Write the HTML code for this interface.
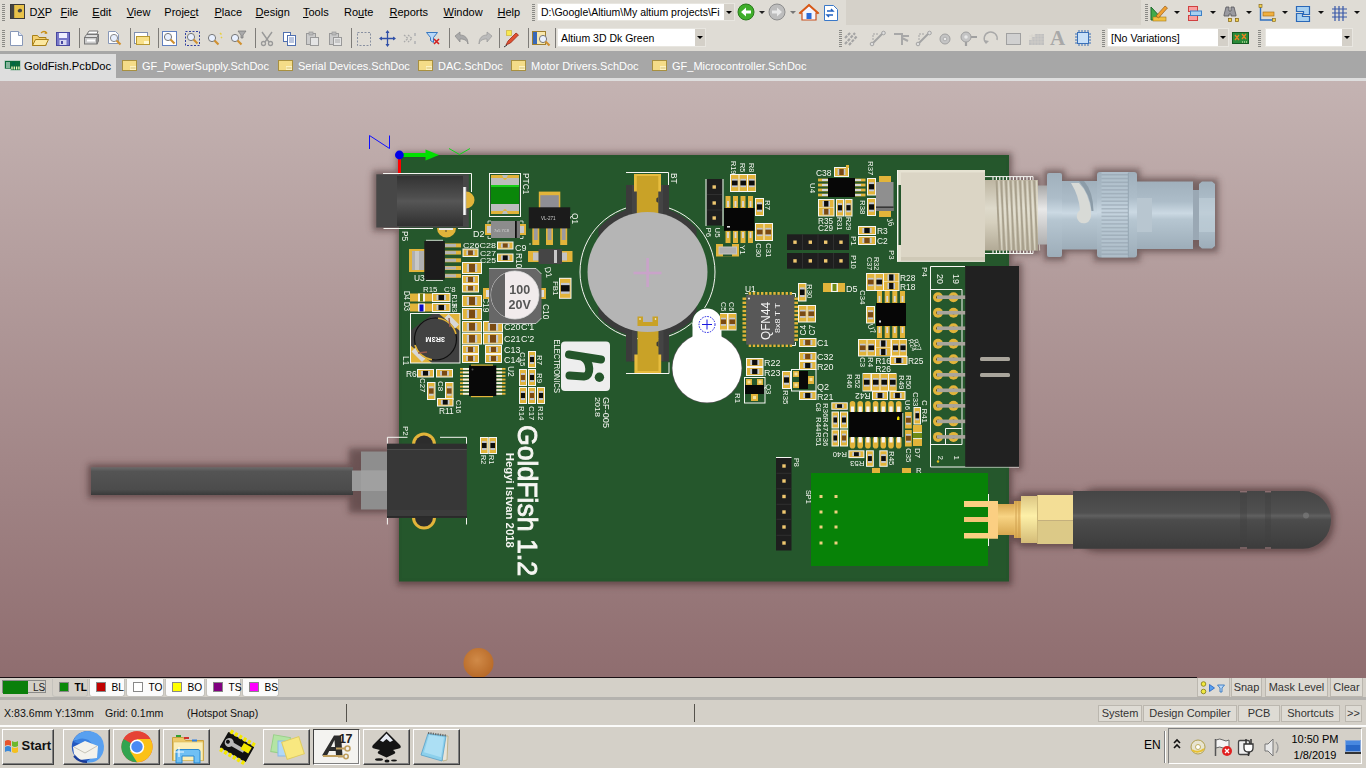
<!DOCTYPE html>
<html lang="en"><head><meta charset="utf-8"><title>Altium Designer - GoldFish.PcbDoc</title>
<style>
*{box-sizing:border-box}
html,body{margin:0;padding:0;width:1366px;height:768px;overflow:hidden;background:#d4d0c8;font-family:"Liberation Sans",sans-serif}
.abs,.bar,.mi,.tab,.st,.btn,.tbtn,.combo,.grip,.sep,.ltab{position:absolute}
.mi{font-size:11px;line-height:14px;color:#000;white-space:nowrap}
.mi u{text-decoration:underline;text-underline-offset:1px}
.tab{font-size:11px;line-height:14px;white-space:nowrap}
.st{font-size:10.6px;line-height:14px;color:#111;white-space:nowrap}
.grip{width:3px;height:17px;background:repeating-linear-gradient(#8a8a86 0 1px,transparent 1px 2px)}
.sep{width:1px;height:20px;background:#7e7c78}
.combo{background:#fff;border:1px solid #e8e6e0;font-size:11px;line-height:13px;color:#000;overflow:hidden;white-space:nowrap}
.combo span{position:absolute}
.combo i{position:absolute;right:0;top:0;bottom:0;width:10px;background:#d4d0c8}
.combo i:after{content:"";position:absolute;left:2px;top:7px;border:3px solid transparent;border-top:3.5px solid #000}
.btn{border:1px solid #bbb7af;font-size:11px;line-height:15px;text-align:center;color:#333;white-space:nowrap;background:#dedbd4}
.tbtn{border:1px solid;border-color:#fff #404040 #404040 #fff;box-shadow:inset -1px -1px 0 #808080;background:#d4d0c8}
.ltab{top:679px;height:18px;border:1px solid #c4c2bc;border-top:none;border-radius:0 0 3px 3px;font-size:10.2px;line-height:16px;color:#000}
.ltab b{position:absolute;left:6px;top:3px;width:10px;height:10px;border:1px solid #888}
.ltab span{position:absolute;left:21.5px;top:1px}
</style></head>
<body>
<svg class="abs" style="left:0;top:81px;will-change:transform" width="1366" height="597" viewBox="0 81 1366 597" font-family="'Liberation Sans',sans-serif">
<defs><linearGradient id="bg" x1="0" y1="0" x2="0" y2="1"><stop offset="0" stop-color="#c4b3b2"/><stop offset="1" stop-color="#8f6d6f"/></linearGradient><filter id="bl" x="-20%" y="-20%" width="140%" height="140%"><feGaussianBlur stdDeviation="4.5"/></filter><filter id="bl3" x="-10%" y="-10%" width="120%" height="120%"><feGaussianBlur stdDeviation="2"/></filter><filter id="bl2" x="-20%" y="-40%" width="140%" height="180%"><feGaussianBlur stdDeviation="4"/></filter><linearGradient id="cyl" x1="0" y1="0" x2="0" y2="1"><stop offset="0" stop-color="#333"/><stop offset=".42" stop-color="#4e4e4e"/><stop offset=".5" stop-color="#565656"/><stop offset="1" stop-color="#303030"/></linearGradient><linearGradient id="ant" x1="0" y1="0" x2="0" y2="1"><stop offset="0" stop-color="#454545"/><stop offset=".38" stop-color="#505050"/><stop offset=".43" stop-color="#606060"/><stop offset=".5" stop-color="#4c4c4c"/><stop offset="1" stop-color="#3c3c3c"/></linearGradient><linearGradient id="cab" x1="0" y1="0" x2="0" y2="1"><stop offset="0" stop-color="#6a6a6a"/><stop offset=".15" stop-color="#545454"/><stop offset=".8" stop-color="#4c4c4c"/><stop offset="1" stop-color="#3a3a3a"/></linearGradient><linearGradient id="bnc" x1="0" y1="0" x2="0" y2="1"><stop offset="0" stop-color="#a0b0bc"/><stop offset=".3" stop-color="#adbdc9"/><stop offset=".47" stop-color="#cbd9e3"/><stop offset=".56" stop-color="#b6c6d1"/><stop offset="1" stop-color="#9dadb9"/></linearGradient><linearGradient id="thr" x1="0" y1="0" x2="0" y2="1"><stop offset="0" stop-color="#beb6a2"/><stop offset=".4" stop-color="#dedacb"/><stop offset=".6" stop-color="#d6d0be"/><stop offset="1" stop-color="#b2aa96"/></linearGradient><linearGradient id="sil" x1="0" y1="0" x2="0" y2="1"><stop offset="0" stop-color="#a8a8a8"/><stop offset=".4" stop-color="#e8e8e8"/><stop offset="1" stop-color="#b0b0b0"/></linearGradient><linearGradient id="sma" x1="0" y1="0" x2="0" y2="1"><stop offset="0" stop-color="#d8a850"/><stop offset=".4" stop-color="#f8d484"/><stop offset="1" stop-color="#d8a850"/></linearGradient><linearGradient id="smr" x1="0" y1="0" x2="0" y2="1"><stop offset="0" stop-color="#dcc684"/><stop offset=".42" stop-color="#fdf0a8"/><stop offset="1" stop-color="#d4bc78"/></linearGradient><radialGradient id="org" cx=".45" cy=".4" r=".6"><stop offset="0" stop-color="#d08a48"/><stop offset="1" stop-color="#b86a28"/></radialGradient><linearGradient id="pinw" x1="0" y1="0" x2="1" y2="0"><stop offset="0" stop-color="#bbb"/><stop offset=".5" stop-color="#fff"/><stop offset="1" stop-color="#aaa"/></linearGradient></defs>
<rect x="0" y="81" width="1366" height="597" fill="url(#bg)"/>
<g filter="url(#bl)" opacity=".30" fill="#2a1414">
<rect x="397" y="153" width="615" height="432" fill="#2a1414"/>
<rect x="373" y="171" width="30" height="60" fill="#2a1414"/>
<rect x="985" y="176" width="55" height="78" fill="#2a1414"/>
<rect x="1044" y="170" width="21" height="90" fill="#2a1414"/>
<rect x="1062" y="178" width="134" height="74" fill="#2a1414"/>
<rect x="1094" y="169" width="46" height="92" fill="#2a1414"/>
<rect x="1196" y="179" width="22" height="73" fill="#2a1414"/>
<rect x="1014" y="263" width="8" height="207" fill="#2a1414"/>
<rect x="1012" y="498" width="28" height="44" fill="#2a1414"/>
<rect x="1019" y="492" width="57" height="55" fill="#2a1414"/>
<rect x="1070" y="488" width="264" height="64" fill="#2a1414" rx="28"/>
<rect x="88" y="464.5" width="268" height="33.5" fill="#2a1414"/>
<rect x="349" y="448.5" width="42" height="64" fill="#2a1414"/>
</g>
<g filter="url(#bl3)" opacity=".22" fill="#2a1414">
<rect x="397" y="153" width="615" height="432" fill="#2a1414"/>
<rect x="373" y="171" width="30" height="60" fill="#2a1414"/>
<rect x="985" y="176" width="55" height="78" fill="#2a1414"/>
<rect x="1044" y="170" width="21" height="90" fill="#2a1414"/>
<rect x="1062" y="178" width="134" height="74" fill="#2a1414"/>
<rect x="1094" y="169" width="46" height="92" fill="#2a1414"/>
<rect x="1196" y="179" width="22" height="73" fill="#2a1414"/>
<rect x="1014" y="263" width="8" height="207" fill="#2a1414"/>
<rect x="1012" y="498" width="28" height="44" fill="#2a1414"/>
<rect x="1019" y="492" width="57" height="55" fill="#2a1414"/>
<rect x="1070" y="488" width="264" height="64" fill="#2a1414" rx="28"/>
<rect x="88" y="464.5" width="268" height="33.5" fill="#2a1414"/>
<rect x="349" y="448.5" width="42" height="64" fill="#2a1414"/>
</g>
<rect x="399" y="155" width="610" height="426.5" fill="#24552b"/>
<rect x="402" y="158" width="604" height="420" fill="#265a2d" opacity=".5"/>
<path d="M399.5 158L399.5 174" stroke="#ff0000" stroke-width="3"/>
<rect x="403" y="153" width="24" height="4" fill="#00e000"/>
<path d="M425.5 149.5L439 155L425.5 160.5z" fill="#00e000"/>
<circle cx="399.4" cy="155" r="4.4" fill="#0000e8"/>
<path d="M369.5 149V135.5L389.5 148.500V135.5" fill="none" stroke="#1010ff" stroke-width="1"/>
<path d="M449 148.500L459.500 154.500L470 148.500" fill="none" stroke="#10d818" stroke-width="1"/>
<path d="M433 228.500H383.5M383 173.500H471.500V192M471.500 210V228.500H458" fill="none" stroke="#f6f6f2" stroke-width="1"/>
<path d="M437 228a9.5 9.5 0 0 0 19 0z" fill="#e2b43a"/>
<rect x="439" y="228" width="14" height="2" fill="#e8e8e8"/>
<circle cx="446" cy="231" r="0.8" fill="#333"/>
<rect x="376.3" y="174.3" width="92.5" height="53.2" fill="#474747"/>
<rect x="397" y="176" width="66" height="50" fill="url(#cyl)"/>
<path d="M466 191.500a8.500 8.500 0 0 1 0 17z" fill="#e2b43a"/>
<rect x="463" y="187" width="3.3" height="28" fill="url(#pinw)"/>
<text x="402" y="231" font-size="8.4" fill="#f6f6f2" text-anchor="start" transform="rotate(90 402 231)">P5</text>
<rect x="489.5" y="173.5" width="31" height="43" fill="none" stroke="#f6f6f2" stroke-width="1"/>
<rect x="491" y="175" width="28" height="39" fill="#e2b43a"/>
<rect x="491" y="178" width="28" height="33" fill="#bdbdbd"/>
<path d="M502 175h6l-1.500 3h-3z" fill="#bdbdbd"/>
<path d="M502 214h6l-1.500-3h-3z" fill="#bdbdbd"/>
<path d="M503 178h4l-1 1.800h-2z" fill="#e2b43a"/>
<path d="M503 211h4l-1-1.800h-2z" fill="#e2b43a"/>
<rect x="491" y="185" width="28" height="19" fill="#0a870a"/>
<rect x="491" y="185" width="28" height="2" fill="#18d018"/>
<text x="522.5" y="173" font-size="8.4" fill="#f6f6f2" text-anchor="start" transform="rotate(90 522.5 173)">PTC1</text>
<rect x="485" y="224" width="41" height="11" fill="#e2b43a"/>
<rect x="487" y="226" width="4" height="7" fill="#c8c8c8"/>
<rect x="520" y="226" width="4" height="7" fill="#c8c8c8"/>
<rect x="491" y="221" width="29" height="17" fill="#8c8c8c"/>
<rect x="515" y="221" width="1.8" height="17" fill="#111"/>
<rect x="517" y="221" width="3" height="17" fill="#777"/>
<path d="M488 223.500V221h3M488 236v2.500h3M523 223.500V221h-3M523 236v2.500h-3" fill="none" stroke="#f6f6f2" stroke-width="0.8"/>
<text x="473" y="237" font-size="8.96" fill="#f6f6f2" text-anchor="start">D2</text>
<text x="494" y="232" font-size="4" fill="#d8d8d8" text-anchor="start">7x5 7C8</text>
<rect x="538.8" y="191.6" width="21.5" height="17" fill="#e2b43a"/>
<rect x="540.3" y="195.2" width="18.5" height="13" fill="#8e8e94"/>
<rect x="532.3" y="228" width="7" height="17" fill="#e2b43a"/>
<rect x="533.9" y="228" width="3.8" height="12" fill="#9a9aa0"/>
<rect x="546" y="228" width="7" height="17" fill="#e2b43a"/>
<rect x="547.6" y="228" width="3.8" height="12" fill="#9a9aa0"/>
<rect x="560.2" y="228" width="7" height="17" fill="#e2b43a"/>
<rect x="561.8" y="228" width="3.8" height="12" fill="#9a9aa0"/>
<rect x="528.8" y="207.3" width="41.4" height="21.1" fill="#1b1b1b"/>
<text x="541" y="220" font-size="4.5" fill="#d0d0d0" text-anchor="start">VL-271</text>
<text x="571.5" y="213" font-size="8.4" fill="#f6f6f2" text-anchor="start" transform="rotate(90 571.5 213)">Q1</text>
<path d="M529 244L531 244" stroke="#f6f6f2" stroke-width="0.8"/>
<rect x="409" y="249" width="16" height="23" fill="#e2b43a"/>
<rect x="412" y="251" width="12" height="19" fill="#b0b0b0"/>
<rect x="415" y="251" width="4" height="19" fill="#c8c8c8"/>
<rect x="445" y="243.4" width="16" height="4" fill="#e2b43a"/>
<rect x="445" y="243.9" width="11" height="3" fill="#b4b4b4"/>
<rect x="445" y="250.6" width="16" height="4" fill="#e2b43a"/>
<rect x="445" y="251.1" width="11" height="3" fill="#b4b4b4"/>
<rect x="445" y="258.3" width="16" height="4" fill="#e2b43a"/>
<rect x="445" y="258.8" width="11" height="3" fill="#b4b4b4"/>
<rect x="445" y="266" width="16" height="4" fill="#e2b43a"/>
<rect x="445" y="266.5" width="11" height="3" fill="#b4b4b4"/>
<rect x="445" y="273.8" width="16" height="4" fill="#e2b43a"/>
<rect x="445" y="274.3" width="11" height="3" fill="#b4b4b4"/>
<rect x="424.3" y="241" width="20.5" height="38.8" fill="#1c1c1c"/>
<path d="M426 240.3L443 240.3" stroke="#f6f6f2" stroke-width="0.8"/>
<path d="M426 280.5L443 280.5" stroke="#f6f6f2" stroke-width="0.8"/>
<text x="414" y="281" font-size="8.4" fill="#f6f6f2" text-anchor="start">U3</text>
<rect x="462.5" y="248.5" width="16" height="8.5" fill="#f6f6f2"/>
<rect x="463.5" y="249.5" width="14" height="6.5" fill="#e2b43a"/>
<rect x="466.34" y="250.4" width="8.32" height="4.7" fill="#c4c8d2"/>
<rect x="468.1" y="250.4" width="4.8" height="4.7" fill="#7a4a12"/>
<rect x="497" y="241.5" width="16.5" height="8" fill="#f6f6f2"/>
<rect x="498" y="242.5" width="14.5" height="6" fill="#e2b43a"/>
<rect x="500.96" y="243.4" width="8.58" height="4.2" fill="#c4c8d2"/>
<rect x="502.77" y="243.4" width="4.95" height="4.2" fill="#7a4a12"/>
<rect x="497" y="253.5" width="16.5" height="8.5" fill="#f6f6f2"/>
<rect x="498" y="254.5" width="14.5" height="6.5" fill="#e2b43a"/>
<rect x="500.96" y="255.4" width="8.58" height="4.7" fill="#c4c8d2"/>
<rect x="502.77" y="255.4" width="4.95" height="4.7" fill="#0c0c0c"/>
<text x="463" y="248" font-size="7" fill="#f6f6f2" text-anchor="start" textLength="33" lengthAdjust="spacingAndGlyphs">C26C28</text>
<text x="480" y="255.5" font-size="7" fill="#f6f6f2" text-anchor="start" textLength="16" lengthAdjust="spacingAndGlyphs">C27</text>
<text x="480" y="262.5" font-size="7" fill="#f6f6f2" text-anchor="start" textLength="16" lengthAdjust="spacingAndGlyphs">C25</text>
<text x="515" y="251" font-size="8.96" fill="#f6f6f2" text-anchor="start">C9</text>
<text x="515.5" y="253" font-size="8.4" fill="#f6f6f2" text-anchor="start" transform="rotate(90 515.5 253)">R10</text>
<rect x="462" y="262" width="20" height="12" fill="#f6f6f2"/>
<rect x="463" y="263" width="18" height="10" fill="#e2b43a"/>
<rect x="466.8" y="263.9" width="10.4" height="8.2" fill="#c4c8d2"/>
<rect x="469" y="263.9" width="6" height="8.2" fill="#7a4a12"/>
<rect x="462" y="275" width="17" height="9" fill="#f6f6f2"/>
<rect x="463" y="276" width="15" height="7" fill="#e2b43a"/>
<rect x="466.08" y="276.9" width="8.84" height="5.2" fill="#c4c8d2"/>
<rect x="467.95" y="276.9" width="5.1" height="5.2" fill="#7a4a12"/>
<rect x="462" y="284" width="17" height="8.5" fill="#f6f6f2"/>
<rect x="463" y="285" width="15" height="6.5" fill="#e2b43a"/>
<rect x="466.08" y="285.9" width="8.84" height="4.7" fill="#c4c8d2"/>
<rect x="467.95" y="285.9" width="5.1" height="4.7" fill="#7a4a12"/>
<rect x="462" y="295" width="20" height="12" fill="#f6f6f2"/>
<rect x="463" y="296" width="18" height="10" fill="#e2b43a"/>
<rect x="466.8" y="296.9" width="10.4" height="8.2" fill="#c4c8d2"/>
<rect x="469" y="296.9" width="6" height="8.2" fill="#7a4a12"/>
<rect x="462" y="308" width="20" height="12" fill="#f6f6f2"/>
<rect x="463" y="309" width="18" height="10" fill="#e2b43a"/>
<rect x="466.8" y="309.9" width="10.4" height="8.2" fill="#c4c8d2"/>
<rect x="469" y="309.9" width="6" height="8.2" fill="#7a4a12"/>
<rect x="462" y="321" width="20" height="11.5" fill="#f6f6f2"/>
<rect x="463" y="322" width="18" height="9.5" fill="#e2b43a"/>
<rect x="466.8" y="322.9" width="10.4" height="7.7" fill="#c4c8d2"/>
<rect x="469" y="322.9" width="6" height="7.7" fill="#7a4a12"/>
<rect x="462" y="333" width="20" height="11.5" fill="#f6f6f2"/>
<rect x="463" y="334" width="18" height="9.5" fill="#e2b43a"/>
<rect x="466.8" y="334.9" width="10.4" height="7.7" fill="#c4c8d2"/>
<rect x="469" y="334.9" width="6" height="7.7" fill="#7a4a12"/>
<rect x="462" y="345" width="17" height="9" fill="#f6f6f2"/>
<rect x="463" y="346" width="15" height="7" fill="#e2b43a"/>
<rect x="466.08" y="346.9" width="8.84" height="5.2" fill="#c4c8d2"/>
<rect x="467.95" y="346.9" width="5.1" height="5.2" fill="#7a4a12"/>
<rect x="462" y="354" width="17" height="9" fill="#f6f6f2"/>
<rect x="463" y="355" width="15" height="7" fill="#e2b43a"/>
<rect x="466.08" y="355.9" width="8.84" height="5.2" fill="#c4c8d2"/>
<rect x="467.95" y="355.9" width="5.1" height="5.2" fill="#7a4a12"/>
<rect x="483" y="321" width="20" height="11.5" fill="#f6f6f2"/>
<rect x="484" y="322" width="18" height="9.5" fill="#e2b43a"/>
<rect x="487.8" y="322.9" width="10.4" height="7.7" fill="#c4c8d2"/>
<rect x="490" y="322.9" width="6" height="7.7" fill="#7a4a12"/>
<rect x="483" y="333" width="20" height="11.5" fill="#f6f6f2"/>
<rect x="484" y="334" width="18" height="9.5" fill="#e2b43a"/>
<rect x="487.8" y="334.9" width="10.4" height="7.7" fill="#c4c8d2"/>
<rect x="490" y="334.9" width="6" height="7.7" fill="#7a4a12"/>
<rect x="485" y="345" width="17" height="9" fill="#f6f6f2"/>
<rect x="486" y="346" width="15" height="7" fill="#e2b43a"/>
<rect x="489.08" y="346.9" width="8.84" height="5.2" fill="#c4c8d2"/>
<rect x="490.95" y="346.9" width="5.1" height="5.2" fill="#7a4a12"/>
<rect x="485" y="354" width="17" height="9" fill="#f6f6f2"/>
<rect x="486" y="355" width="15" height="7" fill="#e2b43a"/>
<rect x="489.08" y="355.9" width="8.84" height="5.2" fill="#c4c8d2"/>
<rect x="490.95" y="355.9" width="5.1" height="5.2" fill="#7a4a12"/>
<text x="482.5" y="297" font-size="8.4" fill="#f6f6f2" text-anchor="start" transform="rotate(90 482.5 297)">C19</text>
<text x="504" y="329.5" font-size="8.96" fill="#f6f6f2" text-anchor="start">C20</text>
<text x="521" y="329.5" font-size="8.96" fill="#f6f6f2" text-anchor="start">C'1</text>
<text x="504" y="342" font-size="8.96" fill="#f6f6f2" text-anchor="start">C21</text>
<text x="521" y="342" font-size="8.96" fill="#f6f6f2" text-anchor="start">C'2</text>
<text x="504" y="353" font-size="8.96" fill="#f6f6f2" text-anchor="start">C13</text>
<text x="504" y="362.5" font-size="8.96" fill="#f6f6f2" text-anchor="start">C14</text>
<rect x="528" y="251" width="44.5" height="11" fill="#e2b43a"/>
<rect x="533" y="252.5" width="6" height="8" fill="#c4c4c4"/>
<rect x="562" y="252.5" width="5" height="8" fill="#c4c4c4"/>
<rect x="538.5" y="249" width="23.5" height="15" fill="#454545"/>
<rect x="554" y="250" width="3" height="13" fill="#c8c8c8"/>
<text x="544.5" y="267.5" font-size="8.4" fill="#f6f6f2" text-anchor="start" transform="rotate(78 544.5 267.5)">D1</text>
<rect x="483" y="288" width="6.5" height="11" fill="#e2b43a"/>
<rect x="541" y="288" width="5" height="11" fill="#e2b43a"/>
<rect x="486" y="290" width="3" height="7" fill="#ddd"/>
<rect x="541" y="290" width="3" height="7" fill="#ddd"/>
<path d="M489 268.500H536L541.500 274V318L536 323.500H489z" fill="#676767"/>
<path d="M489 268.500H536L541.500 274" fill="none" stroke="#e8e8e8" stroke-width="0.8"/>
<path d="M541.500 318L536 323.500H489" fill="none" stroke="#e8e8e8" stroke-width="0.8"/>
<circle cx="515" cy="295" r="24" fill="#f1ebec" stroke="#ddd" stroke-width=".8"/>
<path d="M505 273.200A24 24 0 0 0 505 316.800z" fill="#636363"/>
<text x="519.7" y="294" font-size="12.5" fill="#555" text-anchor="middle" font-weight="bold">100</text>
<text x="519.7" y="308.5" font-size="12.5" fill="#555" text-anchor="middle" font-weight="bold">20V</text>
<text x="543" y="304" font-size="8.4" fill="#f6f6f2" text-anchor="start" transform="rotate(90 543 304)">C10</text>
<rect x="559" y="277.8" width="12.5" height="21" fill="#f6f6f2"/>
<rect x="560" y="278.8" width="10.5" height="19" fill="#e2b43a"/>
<rect x="560.9" y="282.84" width="8.7" height="10.92" fill="#c4c8d2"/>
<rect x="560.9" y="285.15" width="8.7" height="6.3" fill="#0c0c0c"/>
<text x="552.5" y="281" font-size="7.84" fill="#f6f6f2" text-anchor="start" transform="rotate(90 552.5 281)">FB1</text>
<rect x="410" y="293.5" width="22" height="8" fill="#e2b43a"/>
<rect x="418" y="293.5" width="7" height="8" fill="#f4f4f0"/>
<rect x="420" y="293.5" width="3" height="8" fill="#6c7c10"/>
<rect x="410" y="303.5" width="22" height="8" fill="#e2b43a"/>
<rect x="418" y="303.5" width="7" height="8" fill="#f4f4f0"/>
<rect x="419.5" y="304.5" width="4" height="7" fill="#0808c8"/>
<rect x="432" y="293" width="18.5" height="9" fill="#f6f6f2"/>
<rect x="433" y="294" width="16.5" height="7" fill="#e2b43a"/>
<rect x="436.44" y="294.9" width="9.62" height="5.2" fill="#c4c8d2"/>
<rect x="438.48" y="294.9" width="5.55" height="5.2" fill="#0c0c0c"/>
<rect x="432" y="303" width="18.5" height="9" fill="#f6f6f2"/>
<rect x="433" y="304" width="16.5" height="7" fill="#e2b43a"/>
<rect x="436.44" y="304.9" width="9.62" height="5.2" fill="#c4c8d2"/>
<rect x="438.48" y="304.9" width="5.55" height="5.2" fill="#0c0c0c"/>
<text x="403.5" y="291" font-size="8.4" fill="#f6f6f2" text-anchor="start" transform="rotate(90 403.5 291)" textLength="9" lengthAdjust="spacingAndGlyphs">D4</text>
<text x="403.5" y="302" font-size="8.4" fill="#f6f6f2" text-anchor="start" transform="rotate(90 403.5 302)" textLength="9" lengthAdjust="spacingAndGlyphs">D3</text>
<text x="423" y="292" font-size="7.84" fill="#f6f6f2" text-anchor="start">R15</text>
<text x="444" y="292" font-size="7.84" fill="#f6f6f2" text-anchor="start">C'8</text>
<text x="452" y="294.5" font-size="6.72" fill="#f6f6f2" text-anchor="start" transform="rotate(90 452 294.5)">R13</text>
<text x="452" y="304" font-size="6.72" fill="#f6f6f2" text-anchor="start" transform="rotate(90 452 304)">R3</text>
<rect x="410" y="313" width="50" height="50" fill="#404040"/>
<path d="M410 313h24l-24 18z" fill="#24552b"/>
<path d="M438 313h22v18z" fill="#e2b43a"/>
<path d="M410 345v18h22z" fill="#e2b43a"/>
<path d="M444.500 318l4-4 10.500 10.500-4 4z" fill="#d8d8d8"/>
<path d="M411.500 351.500l4-4 10.500 10.500-4 4z" fill="#d8d8d8"/>
<circle cx="435.5" cy="339" r="21" fill="#424242" stroke="#101010" stroke-width="1.200"/>
<path d="M438 318.200A21 21 0 0 1 456 334" fill="none" stroke="#e2b43a" stroke-width="1.6"/>
<path d="M415 345A21 21 0 0 0 432 359.700" fill="none" stroke="#e2b43a" stroke-width="1.6"/>
<path d="M449 318l1 9M418 353l9-1" fill="none" stroke="#9a5a4a" stroke-width="1.4"/>
<rect x="410.5" y="313.5" width="49.5" height="49.5" fill="none" stroke="#f6f6f2" stroke-width="1"/>
<text x="445" y="337.3" font-size="7" fill="#fff" text-anchor="start" transform="rotate(180 445 337.3)" font-weight="bold" textLength="19.500" lengthAdjust="spacingAndGlyphs">3R3M</text>
<text x="402.5" y="356" font-size="8.4" fill="#f6f6f2" text-anchor="start" transform="rotate(90 402.5 356)">L1</text>
<rect x="417" y="369" width="17" height="8.5" fill="#f6f6f2"/>
<rect x="418" y="370" width="15" height="6.5" fill="#e2b43a"/>
<rect x="421.08" y="370.9" width="8.84" height="4.7" fill="#c4c8d2"/>
<rect x="422.95" y="370.9" width="5.1" height="4.7" fill="#0c0c0c"/>
<rect x="436" y="369" width="17" height="8.5" fill="#f6f6f2"/>
<rect x="437" y="370" width="15" height="6.5" fill="#e2b43a"/>
<rect x="440.08" y="370.9" width="8.84" height="4.7" fill="#c4c8d2"/>
<rect x="441.95" y="370.9" width="5.1" height="4.7" fill="#7a4a12"/>
<text x="406" y="376.5" font-size="8.4" fill="#f6f6f2" text-anchor="start">R6</text>
<rect x="427" y="382" width="8.5" height="18" fill="#f6f6f2"/>
<rect x="428" y="383" width="6.5" height="16" fill="#e2b43a"/>
<rect x="428.9" y="386.32" width="4.7" height="9.36" fill="#c4c8d2"/>
<rect x="428.9" y="388.3" width="4.7" height="5.4" fill="#7a4a12"/>
<rect x="445" y="382" width="8.5" height="18" fill="#f6f6f2"/>
<rect x="446" y="383" width="6.5" height="16" fill="#e2b43a"/>
<rect x="446.9" y="386.32" width="4.7" height="9.36" fill="#c4c8d2"/>
<rect x="446.9" y="388.3" width="4.7" height="5.4" fill="#7a4a12"/>
<text x="420" y="378" font-size="7.84" fill="#f6f6f2" text-anchor="start" transform="rotate(90 420 378)">C27</text>
<text x="438" y="381" font-size="7.84" fill="#f6f6f2" text-anchor="start" transform="rotate(90 438 381)">C8</text>
<rect x="437" y="398" width="16.5" height="8.5" fill="#f6f6f2"/>
<rect x="438" y="399" width="14.5" height="6.5" fill="#e2b43a"/>
<rect x="440.96" y="399.9" width="8.58" height="4.7" fill="#c4c8d2"/>
<rect x="442.77" y="399.9" width="4.95" height="4.7" fill="#0c0c0c"/>
<text x="439" y="414" font-size="8.4" fill="#f6f6f2" text-anchor="start">R11</text>
<text x="455.5" y="400" font-size="7.28" fill="#f6f6f2" text-anchor="start" transform="rotate(90 455.5 400)">C16</text>
<rect x="460" y="368" width="9" height="1.8" fill="#e2b43a"/>
<rect x="463" y="368" width="6" height="1.8" fill="#f4f4e8"/>
<rect x="496" y="368" width="9.5" height="1.8" fill="#e2b43a"/>
<rect x="496" y="368" width="6" height="1.8" fill="#f4f4e8"/>
<rect x="460" y="371.55" width="9" height="1.8" fill="#e2b43a"/>
<rect x="463" y="371.55" width="6" height="1.8" fill="#f4f4e8"/>
<rect x="496" y="371.55" width="9.5" height="1.8" fill="#e2b43a"/>
<rect x="496" y="371.55" width="6" height="1.8" fill="#f4f4e8"/>
<rect x="460" y="375.1" width="9" height="1.8" fill="#e2b43a"/>
<rect x="463" y="375.1" width="6" height="1.8" fill="#f4f4e8"/>
<rect x="496" y="375.1" width="9.5" height="1.8" fill="#e2b43a"/>
<rect x="496" y="375.1" width="6" height="1.8" fill="#f4f4e8"/>
<rect x="460" y="378.65" width="9" height="1.8" fill="#e2b43a"/>
<rect x="463" y="378.65" width="6" height="1.8" fill="#f4f4e8"/>
<rect x="496" y="378.65" width="9.5" height="1.8" fill="#e2b43a"/>
<rect x="496" y="378.65" width="6" height="1.8" fill="#f4f4e8"/>
<rect x="460" y="382.2" width="9" height="1.8" fill="#e2b43a"/>
<rect x="463" y="382.2" width="6" height="1.8" fill="#f4f4e8"/>
<rect x="496" y="382.2" width="9.5" height="1.8" fill="#e2b43a"/>
<rect x="496" y="382.2" width="6" height="1.8" fill="#f4f4e8"/>
<rect x="460" y="385.75" width="9" height="1.8" fill="#e2b43a"/>
<rect x="463" y="385.75" width="6" height="1.8" fill="#f4f4e8"/>
<rect x="496" y="385.75" width="9.5" height="1.8" fill="#e2b43a"/>
<rect x="496" y="385.75" width="6" height="1.8" fill="#f4f4e8"/>
<rect x="460" y="389.3" width="9" height="1.8" fill="#e2b43a"/>
<rect x="463" y="389.3" width="6" height="1.8" fill="#f4f4e8"/>
<rect x="496" y="389.3" width="9.5" height="1.8" fill="#e2b43a"/>
<rect x="496" y="389.3" width="6" height="1.8" fill="#f4f4e8"/>
<rect x="460" y="392.85" width="9" height="1.8" fill="#e2b43a"/>
<rect x="463" y="392.85" width="6" height="1.8" fill="#f4f4e8"/>
<rect x="496" y="392.85" width="9.5" height="1.8" fill="#e2b43a"/>
<rect x="496" y="392.85" width="6" height="1.8" fill="#f4f4e8"/>
<rect x="469" y="365.5" width="27.3" height="30.5" fill="#080808"/>
<circle cx="472.5" cy="369.5" r="1" fill="#555"/>
<rect x="471" y="364.5" width="22" height="1.2" fill="#e2b43a"/>
<rect x="471" y="396" width="22" height="1.2" fill="#e2b43a"/>
<text x="507.5" y="366" font-size="8.4" fill="#f6f6f2" text-anchor="start" transform="rotate(90 507.5 366)">U2</text>
<rect x="528" y="351" width="8" height="17" fill="#f6f6f2"/>
<rect x="529" y="352" width="6" height="15" fill="#e2b43a"/>
<rect x="529.9" y="355.08" width="4.2" height="8.84" fill="#c4c8d2"/>
<rect x="529.9" y="356.95" width="4.2" height="5.1" fill="#0c0c0c"/>
<rect x="519" y="369" width="8" height="17" fill="#f6f6f2"/>
<rect x="520" y="370" width="6" height="15" fill="#e2b43a"/>
<rect x="520.9" y="373.08" width="4.2" height="8.84" fill="#c4c8d2"/>
<rect x="520.9" y="374.95" width="4.2" height="5.1" fill="#7a4a12"/>
<rect x="528" y="369" width="8" height="17" fill="#f6f6f2"/>
<rect x="529" y="370" width="6" height="15" fill="#e2b43a"/>
<rect x="529.9" y="373.08" width="4.2" height="8.84" fill="#c4c8d2"/>
<rect x="529.9" y="374.95" width="4.2" height="5.1" fill="#0c0c0c"/>
<rect x="519" y="387" width="8" height="17" fill="#f6f6f2"/>
<rect x="520" y="388" width="6" height="15" fill="#e2b43a"/>
<rect x="520.9" y="391.08" width="4.2" height="8.84" fill="#c4c8d2"/>
<rect x="520.9" y="392.95" width="4.2" height="5.1" fill="#0c0c0c"/>
<rect x="528" y="387" width="8" height="17" fill="#f6f6f2"/>
<rect x="529" y="388" width="6" height="15" fill="#e2b43a"/>
<rect x="529.9" y="391.08" width="4.2" height="8.84" fill="#c4c8d2"/>
<rect x="529.9" y="392.95" width="4.2" height="5.1" fill="#7a4a12"/>
<rect x="537" y="387" width="8" height="17" fill="#f6f6f2"/>
<rect x="538" y="388" width="6" height="15" fill="#e2b43a"/>
<rect x="538.9" y="391.08" width="4.2" height="8.84" fill="#c4c8d2"/>
<rect x="538.9" y="392.95" width="4.2" height="5.1" fill="#0c0c0c"/>
<text x="519.5" y="352" font-size="7.84" fill="#f6f6f2" text-anchor="start" transform="rotate(90 519.5 352)">C15</text>
<text x="536.5" y="355" font-size="7.84" fill="#f6f6f2" text-anchor="start" transform="rotate(90 536.5 355)">R7</text>
<text x="536.5" y="373" font-size="7.84" fill="#f6f6f2" text-anchor="start" transform="rotate(90 536.5 373)">R9</text>
<text x="519" y="406" font-size="7.84" fill="#f6f6f2" text-anchor="start" transform="rotate(90 519 406)">R14</text>
<text x="528.5" y="406" font-size="7.84" fill="#f6f6f2" text-anchor="start" transform="rotate(90 528.5 406)">C17</text>
<text x="537.5" y="406" font-size="7.84" fill="#f6f6f2" text-anchor="start" transform="rotate(90 537.5 406)">R12</text>
<rect x="480" y="437" width="8.5" height="17" fill="#f6f6f2"/>
<rect x="481" y="438" width="6.5" height="15" fill="#e2b43a"/>
<rect x="481.9" y="441.08" width="4.7" height="8.84" fill="#c4c8d2"/>
<rect x="481.9" y="442.95" width="4.7" height="5.1" fill="#0c0c0c"/>
<rect x="488.5" y="437" width="8.5" height="17" fill="#f6f6f2"/>
<rect x="489.5" y="438" width="6.5" height="15" fill="#e2b43a"/>
<rect x="490.4" y="441.08" width="4.7" height="8.84" fill="#c4c8d2"/>
<rect x="490.4" y="442.95" width="4.7" height="5.1" fill="#0c0c0c"/>
<text x="489" y="455" font-size="7.28" fill="#f6f6f2" text-anchor="start" transform="rotate(90 489 455)">R1</text>
<text x="481" y="455" font-size="7.28" fill="#f6f6f2" text-anchor="start" transform="rotate(90 481 455)">R2</text>
<text x="553.8" y="339.5" font-size="8.4" fill="#f6f6f2" text-anchor="start" transform="rotate(90 553.8 339.5)" textLength="53.500" lengthAdjust="spacingAndGlyphs">ELECTRONICS</text>
<rect x="561" y="341.5" width="49" height="49.5" fill="#eeeeee" rx="4"/>
<path d="M569 354.500L601 359.500" fill="none" stroke="#24552b" stroke-width="8" stroke-linecap="round"/>
<path d="M584 358C590 362 592 376 584 376.500L569.500 375.500" fill="none" stroke="#24552b" stroke-width="8" stroke-linecap="round" stroke-linejoin="round"/>
<circle cx="599.4" cy="377.3" r="4.7" fill="#24552b"/>
<text x="603" y="397" font-size="8.4" fill="#f6f6f2" text-anchor="start" transform="rotate(90 603 397)" textLength="31" lengthAdjust="spacingAndGlyphs">GF-005</text>
<text x="594.5" y="397" font-size="7.8" fill="#f6f6f2" text-anchor="start" transform="rotate(90 594.5 397)" textLength="20" lengthAdjust="spacingAndGlyphs">2018</text>
<text x="517.7" y="425" font-size="28" fill="#f6f6f2" text-anchor="start" transform="rotate(90 517.7 425)" textLength="151" lengthAdjust="spacingAndGlyphs" stroke="#f6f6f2" stroke-width=".9">GoldFish 1.2</text>
<text x="505.6" y="452.8" font-size="10.5" fill="#f6f6f2" text-anchor="start" transform="rotate(90 505.6 452.8)" font-weight="bold" textLength="95" lengthAdjust="spacingAndGlyphs">Hegyi Istvan 2018</text>
<circle cx="647.5" cy="272" r="67.5" fill="none" stroke="#f6f6f2" stroke-width="1"/>
<path d="M598.4 240V228.5A66 66 0 0 1 626 209.7V185H636.8V228z" fill="#3b3b3b"/>
<path d="M696.6 240V228.5A66 66 0 0 0 669 209.7V185H658.2V228z" fill="#3b3b3b"/>
<path d="M598.4 304V315.5A66 66 0 0 0 626 334.3V361.5H636.8V316z" fill="#3b3b3b"/>
<path d="M696.6 304V315.5A66 66 0 0 1 669 334.3V361.5H658.2V316z" fill="#3b3b3b"/>
<rect x="632" y="185" width="5" height="30" fill="#444"/>
<rect x="658" y="185" width="5" height="30" fill="#444"/>
<rect x="632" y="330" width="5" height="31" fill="#444"/>
<rect x="658.5" y="330" width="5" height="31" fill="#444"/>
<rect x="634" y="174" width="27" height="17.5" fill="#e6bc3e"/>
<rect x="636.8" y="176" width="21.5" height="37.5" fill="#c9a227"/>
<rect x="634.4" y="354.5" width="26.8" height="18.5" fill="#e6bc3e"/>
<rect x="637.5" y="331" width="21" height="40" fill="#c9a227"/>
<path d="M658.3 197l-2 1.5v3l2 1.5z" fill="#3b3b3b"/>
<path d="M658.5 347l-2 -1.5v-3l2 -1.5z" fill="#3b3b3b"/>
<circle cx="647.5" cy="272" r="60" fill="#b5b5b5"/>
<path d="M637.500 316.500h5.500v5.500h9.500v-5.500h5.500v9.500h-20.500z" fill="#c9a227"/>
<circle cx="640" cy="319" r="0.8" fill="#fff"/>
<circle cx="655.5" cy="319" r="0.8" fill="#fff"/>
<path d="M626 172.500H668.500V185" fill="none" stroke="#f6f6f2" stroke-width="1"/>
<path d="M626 373.500H669V362.300" fill="none" stroke="#f6f6f2" stroke-width="1"/>
<rect x="646.3" y="258" width="2.6" height="29" fill="#c9a3c9"/>
<rect x="633.5" y="271.7" width="28" height="2.6" fill="#c9a3c9"/>
<text x="670.5" y="173" font-size="8.4" fill="#f6f6f2" text-anchor="start" transform="rotate(90 670.5 173)">BT</text>
<circle cx="707" cy="368" r="35.3" fill="#555"/>
<circle cx="707" cy="323" r="15.2" fill="#24552b"/>
<circle cx="707" cy="368" r="34.6" fill="#ffffff"/>
<circle cx="707" cy="323" r="14.6" fill="#ffffff"/>
<rect x="692.5" y="323" width="29" height="22" fill="#ffffff"/>
<circle cx="707" cy="324.5" r="8" fill="none" stroke="#1818e0" stroke-width="1" stroke-dasharray="1.500 1.200"/>
<path d="M702 324.500h10M707 319.500v10" fill="none" stroke="#1818e0" stroke-width="1"/>
<rect x="706.5" y="179" width="16" height="46.5" fill="#1e1e1e"/>
<path d="M706 179L706 226" stroke="#f6f6f2" stroke-width="1"/>
<path d="M723 179L723 226" stroke="#f6f6f2" stroke-width="1"/>
<path d="M707 194.5L722 194.5" stroke="#333" stroke-width="0.8"/>
<path d="M707 210L722 210" stroke="#333" stroke-width="0.8"/>
<rect x="712.5" y="185.3" width="3.4" height="3.4" fill="#f0c870"/>
<rect x="712.5" y="201.3" width="3.4" height="3.4" fill="#f0c870"/>
<rect x="712.5" y="216.3" width="3.4" height="3.4" fill="#f0c870"/>
<text x="706" y="227.5" font-size="7.84" fill="#f6f6f2" text-anchor="start" transform="rotate(90 706 227.5)">P6</text>
<text x="714.5" y="227.5" font-size="7.84" fill="#f6f6f2" text-anchor="start" transform="rotate(90 714.5 227.5)">U5</text>
<rect x="730" y="174" width="26" height="18" fill="#f6f6f2"/>
<rect x="731" y="175" width="7.5" height="16" fill="#e2b43a"/>
<rect x="731.9" y="178.84" width="5.7" height="8.32" fill="#c4c8d2"/>
<rect x="731.9" y="180.6" width="5.7" height="4.8" fill="#0c0c0c"/>
<rect x="739.5" y="175" width="7.5" height="16" fill="#e2b43a"/>
<rect x="740.4" y="178.84" width="5.7" height="8.32" fill="#c4c8d2"/>
<rect x="740.4" y="180.6" width="5.7" height="4.8" fill="#0c0c0c"/>
<rect x="748" y="175" width="7.5" height="16" fill="#e2b43a"/>
<rect x="748.9" y="178.84" width="5.7" height="8.32" fill="#c4c8d2"/>
<rect x="748.9" y="180.6" width="5.7" height="4.8" fill="#0c0c0c"/>
<text x="731" y="161" font-size="7.28" fill="#f6f6f2" text-anchor="start" transform="rotate(90 731 161)">R19</text>
<text x="740" y="163" font-size="7.28" fill="#f6f6f2" text-anchor="start" transform="rotate(90 740 163)">R5</text>
<text x="748.5" y="163" font-size="7.28" fill="#f6f6f2" text-anchor="start" transform="rotate(90 748.5 163)">R8</text>
<rect x="725.5" y="196" width="5" height="12.5" fill="#e2b43a"/>
<rect x="727.1" y="201" width="1.8" height="6" fill="#d8d8d8"/>
<rect x="725.5" y="230.5" width="5" height="12.5" fill="#e2b43a"/>
<rect x="727.1" y="232" width="1.8" height="6" fill="#d8d8d8"/>
<rect x="733" y="196" width="5" height="12.5" fill="#e2b43a"/>
<rect x="734.6" y="201" width="1.8" height="6" fill="#d8d8d8"/>
<rect x="733" y="230.5" width="5" height="12.5" fill="#e2b43a"/>
<rect x="734.6" y="232" width="1.8" height="6" fill="#d8d8d8"/>
<rect x="740.5" y="196" width="5" height="12.5" fill="#e2b43a"/>
<rect x="742.1" y="201" width="1.8" height="6" fill="#d8d8d8"/>
<rect x="740.5" y="230.5" width="5" height="12.5" fill="#e2b43a"/>
<rect x="742.1" y="232" width="1.8" height="6" fill="#d8d8d8"/>
<rect x="748" y="196" width="5" height="12.5" fill="#e2b43a"/>
<rect x="749.6" y="201" width="1.8" height="6" fill="#d8d8d8"/>
<rect x="748" y="230.5" width="5" height="12.5" fill="#e2b43a"/>
<rect x="749.6" y="232" width="1.8" height="6" fill="#d8d8d8"/>
<rect x="724" y="208" width="30.5" height="22.8" fill="#060606"/>
<rect x="727" y="226" width="3" height="1.6" fill="#ddd"/>
<rect x="755" y="198" width="9" height="18" fill="#f6f6f2"/>
<rect x="756" y="199" width="7" height="16" fill="#e2b43a"/>
<rect x="756.9" y="202.32" width="5.2" height="9.36" fill="#c4c8d2"/>
<rect x="756.9" y="204.3" width="5.2" height="5.4" fill="#0c0c0c"/>
<text x="765" y="200" font-size="7.84" fill="#f6f6f2" text-anchor="start" transform="rotate(90 765 200)">R7</text>
<rect x="755" y="223" width="18" height="18" fill="#f6f6f2"/>
<rect x="756" y="224" width="7.5" height="16" fill="#e2b43a"/>
<rect x="756.9" y="227.84" width="5.7" height="8.32" fill="#c4c8d2"/>
<rect x="756.9" y="229.6" width="5.7" height="4.8" fill="#7a4a12"/>
<rect x="764.5" y="224" width="7.5" height="16" fill="#e2b43a"/>
<rect x="765.4" y="227.84" width="5.7" height="8.32" fill="#c4c8d2"/>
<rect x="765.4" y="229.6" width="5.7" height="4.8" fill="#7a4a12"/>
<text x="756" y="243" font-size="7.84" fill="#f6f6f2" text-anchor="start" transform="rotate(90 756 243)">C30</text>
<text x="765.5" y="243" font-size="7.84" fill="#f6f6f2" text-anchor="start" transform="rotate(90 765.5 243)">C31</text>
<rect x="716" y="244" width="23" height="12.5" fill="#e2b43a"/>
<rect x="723" y="244" width="9" height="12.5" fill="#24552b"/>
<rect x="718.5" y="246.5" width="18.5" height="8" fill="#c4c4c4"/>
<rect x="719.5" y="247.5" width="16.5" height="6" fill="#b0b0b0"/>
<text x="740" y="245" font-size="7.84" fill="#f6f6f2" text-anchor="start" transform="rotate(90 740 245)">Y1</text>
<rect x="787" y="234.3" width="62" height="15.7" fill="#1e1e1e"/>
<path d="M802.5 234.3L802.5 250" stroke="#333" stroke-width="0.8"/>
<path d="M818 234.3L818 250" stroke="#333" stroke-width="0.8"/>
<path d="M833.5 234.3L833.5 250" stroke="#333" stroke-width="0.8"/>
<rect x="793.3" y="240.5" width="3.4" height="3.4" fill="#f0c870"/>
<rect x="808.6" y="240.5" width="3.4" height="3.4" fill="#f0c870"/>
<rect x="824" y="240.5" width="3.4" height="3.4" fill="#f0c870"/>
<rect x="839.3" y="240.5" width="3.4" height="3.4" fill="#f0c870"/>
<rect x="787" y="253" width="62" height="15.7" fill="#1e1e1e"/>
<path d="M802.5 253L802.5 268.7" stroke="#333" stroke-width="0.8"/>
<path d="M818 253L818 268.7" stroke="#333" stroke-width="0.8"/>
<path d="M833.5 253L833.5 268.7" stroke="#333" stroke-width="0.8"/>
<rect x="793.3" y="259.2" width="3.4" height="3.4" fill="#f0c870"/>
<rect x="808.6" y="259.2" width="3.4" height="3.4" fill="#f0c870"/>
<rect x="824" y="259.2" width="3.4" height="3.4" fill="#f0c870"/>
<rect x="839.3" y="259.2" width="3.4" height="3.4" fill="#f0c870"/>
<text x="851" y="236" font-size="7.84" fill="#f6f6f2" text-anchor="start" transform="rotate(90 851 236)">P1</text>
<text x="851" y="255" font-size="7.84" fill="#f6f6f2" text-anchor="start" transform="rotate(90 851 255)">P10</text>
<rect x="834" y="167" width="15" height="10" fill="#f6f6f2"/>
<rect x="835" y="168" width="13" height="8" fill="#e2b43a"/>
<rect x="837.6" y="168.9" width="7.8" height="6.2" fill="#c4c8d2"/>
<rect x="839.25" y="168.9" width="4.5" height="6.2" fill="#7a4a12"/>
<rect x="846" y="165" width="3" height="3" fill="#e2b43a"/>
<text x="816" y="176" font-size="8.4" fill="#f6f6f2" text-anchor="start">C38</text>
<rect x="818" y="178.6" width="10.5" height="2.8" fill="#e2b43a"/>
<rect x="822" y="179" width="6" height="2" fill="#d8d8d8"/>
<rect x="855" y="178.6" width="10.5" height="2.8" fill="#e2b43a"/>
<rect x="855" y="179" width="6" height="2" fill="#d8d8d8"/>
<rect x="818" y="183.6" width="10.5" height="2.8" fill="#e2b43a"/>
<rect x="822" y="184" width="6" height="2" fill="#d8d8d8"/>
<rect x="855" y="183.6" width="10.5" height="2.8" fill="#e2b43a"/>
<rect x="855" y="184" width="6" height="2" fill="#d8d8d8"/>
<rect x="818" y="188.6" width="10.5" height="2.8" fill="#e2b43a"/>
<rect x="822" y="189" width="6" height="2" fill="#d8d8d8"/>
<rect x="855" y="188.6" width="10.5" height="2.8" fill="#e2b43a"/>
<rect x="855" y="189" width="6" height="2" fill="#d8d8d8"/>
<rect x="818" y="193.6" width="10.5" height="2.8" fill="#e2b43a"/>
<rect x="822" y="194" width="6" height="2" fill="#d8d8d8"/>
<rect x="855" y="193.6" width="10.5" height="2.8" fill="#e2b43a"/>
<rect x="855" y="194" width="6" height="2" fill="#d8d8d8"/>
<rect x="828" y="178" width="27" height="19" fill="#070707"/>
<text x="810" y="183" font-size="7.84" fill="#f6f6f2" text-anchor="start" transform="rotate(90 810 183)">U4</text>
<rect x="818" y="199" width="16.5" height="17.5" fill="#f6f6f2"/>
<rect x="819" y="200" width="14.5" height="7.5" fill="#e2b43a"/>
<rect x="822.48" y="200.9" width="7.54" height="5.7" fill="#c4c8d2"/>
<rect x="824.08" y="200.9" width="4.35" height="5.7" fill="#0c0c0c"/>
<rect x="819" y="208" width="14.5" height="7.5" fill="#e2b43a"/>
<rect x="822.48" y="208.9" width="7.54" height="5.7" fill="#c4c8d2"/>
<rect x="824.08" y="208.9" width="4.35" height="5.7" fill="#7a4a12"/>
<rect x="836" y="199" width="8" height="17.5" fill="#f6f6f2"/>
<rect x="837" y="200" width="6" height="15.5" fill="#e2b43a"/>
<rect x="837.9" y="203.2" width="4.2" height="9.1" fill="#c4c8d2"/>
<rect x="837.9" y="205.12" width="4.2" height="5.25" fill="#0c0c0c"/>
<rect x="844.5" y="199" width="8" height="17.5" fill="#f6f6f2"/>
<rect x="845.5" y="200" width="6" height="15.5" fill="#e2b43a"/>
<rect x="846.4" y="203.2" width="4.2" height="9.1" fill="#c4c8d2"/>
<rect x="846.4" y="205.12" width="4.2" height="5.25" fill="#0c0c0c"/>
<text x="818" y="224" font-size="8.18" fill="#f6f6f2" text-anchor="start">R35</text>
<text x="818" y="231" font-size="8.18" fill="#f6f6f2" text-anchor="start">C29</text>
<text x="836.5" y="217" font-size="7.28" fill="#f6f6f2" text-anchor="start" transform="rotate(90 836.5 217)">R31</text>
<text x="845.5" y="217" font-size="7.28" fill="#f6f6f2" text-anchor="start" transform="rotate(90 845.5 217)">R29</text>
<rect x="867" y="178" width="9" height="17.5" fill="#f6f6f2"/>
<rect x="868" y="179" width="7" height="15.5" fill="#e2b43a"/>
<rect x="868.9" y="182.2" width="5.2" height="9.1" fill="#c4c8d2"/>
<rect x="868.9" y="184.12" width="5.2" height="5.25" fill="#0c0c0c"/>
<text x="868" y="161" font-size="7.84" fill="#f6f6f2" text-anchor="start" transform="rotate(90 868 161)">R37</text>
<rect x="867" y="198" width="9" height="18" fill="#f6f6f2"/>
<rect x="868" y="199" width="7" height="16" fill="#e2b43a"/>
<rect x="868.9" y="202.32" width="5.2" height="9.36" fill="#c4c8d2"/>
<rect x="868.9" y="204.3" width="5.2" height="5.4" fill="#0c0c0c"/>
<text x="860" y="200" font-size="7.84" fill="#f6f6f2" text-anchor="start" transform="rotate(90 860 200)">R38</text>
<rect x="879" y="176" width="12" height="8" fill="#e2b43a"/>
<rect x="879" y="209" width="12" height="8" fill="#e2b43a"/>
<rect x="876" y="182" width="17.5" height="29" fill="#8f8f8f"/>
<rect x="876" y="206.5" width="17.5" height="1.3" fill="#222"/>
<rect x="876" y="208" width="17.5" height="3" fill="#777"/>
<text x="886.5" y="219" font-size="7.84" fill="#f6f6f2" text-anchor="start" transform="rotate(70 886.5 219)">J6</text>
<rect x="858" y="226" width="18" height="9" fill="#f6f6f2"/>
<rect x="859" y="227" width="16" height="7" fill="#e2b43a"/>
<rect x="862.32" y="227.9" width="9.36" height="5.2" fill="#c4c8d2"/>
<rect x="864.3" y="227.9" width="5.4" height="5.2" fill="#0c0c0c"/>
<text x="877" y="234" font-size="8.4" fill="#f6f6f2" text-anchor="start">R3</text>
<rect x="858" y="236" width="18" height="9" fill="#f6f6f2"/>
<rect x="859" y="237" width="16" height="7" fill="#e2b43a"/>
<rect x="862.32" y="237.9" width="9.36" height="5.2" fill="#c4c8d2"/>
<rect x="864.3" y="237.9" width="5.4" height="5.2" fill="#7a4a12"/>
<text x="877" y="244" font-size="8.4" fill="#f6f6f2" text-anchor="start">C2</text>
<text x="889" y="250" font-size="7.84" fill="#f6f6f2" text-anchor="start" transform="rotate(90 889 250)">P3</text>
<text x="874" y="257" font-size="7.28" fill="#f6f6f2" text-anchor="start" transform="rotate(90 874 257)">R32</text>
<text x="866.5" y="257" font-size="7.28" fill="#f6f6f2" text-anchor="start" transform="rotate(90 866.5 257)">C37</text>
<rect x="748.7" y="292" width="2.4" height="3.5" fill="#e2b43a"/>
<rect x="748.7" y="344" width="2.4" height="3" fill="#e2b43a"/>
<rect x="742.5" y="297.5" width="4" height="2.4" fill="#e2b43a"/>
<rect x="794" y="297.5" width="4" height="2.4" fill="#e2b43a"/>
<rect x="752.8" y="292" width="2.4" height="3.5" fill="#e2b43a"/>
<rect x="752.8" y="344" width="2.4" height="3" fill="#e2b43a"/>
<rect x="742.5" y="301.6" width="4" height="2.4" fill="#e2b43a"/>
<rect x="794" y="301.6" width="4" height="2.4" fill="#e2b43a"/>
<rect x="756.9" y="292" width="2.4" height="3.5" fill="#e2b43a"/>
<rect x="756.9" y="344" width="2.4" height="3" fill="#e2b43a"/>
<rect x="742.5" y="305.7" width="4" height="2.4" fill="#e2b43a"/>
<rect x="794" y="305.7" width="4" height="2.4" fill="#e2b43a"/>
<rect x="761" y="292" width="2.4" height="3.5" fill="#e2b43a"/>
<rect x="761" y="344" width="2.4" height="3" fill="#e2b43a"/>
<rect x="742.5" y="309.8" width="4" height="2.4" fill="#e2b43a"/>
<rect x="794" y="309.8" width="4" height="2.4" fill="#e2b43a"/>
<rect x="765.1" y="292" width="2.4" height="3.5" fill="#e2b43a"/>
<rect x="765.1" y="344" width="2.4" height="3" fill="#e2b43a"/>
<rect x="742.5" y="313.9" width="4" height="2.4" fill="#e2b43a"/>
<rect x="794" y="313.9" width="4" height="2.4" fill="#e2b43a"/>
<rect x="769.2" y="292" width="2.4" height="3.5" fill="#e2b43a"/>
<rect x="769.2" y="344" width="2.4" height="3" fill="#e2b43a"/>
<rect x="742.5" y="318" width="4" height="2.4" fill="#e2b43a"/>
<rect x="794" y="318" width="4" height="2.4" fill="#e2b43a"/>
<rect x="773.3" y="292" width="2.4" height="3.5" fill="#e2b43a"/>
<rect x="773.3" y="344" width="2.4" height="3" fill="#e2b43a"/>
<rect x="742.5" y="322.1" width="4" height="2.4" fill="#e2b43a"/>
<rect x="794" y="322.1" width="4" height="2.4" fill="#e2b43a"/>
<rect x="777.4" y="292" width="2.4" height="3.5" fill="#e2b43a"/>
<rect x="777.4" y="344" width="2.4" height="3" fill="#e2b43a"/>
<rect x="742.5" y="326.2" width="4" height="2.4" fill="#e2b43a"/>
<rect x="794" y="326.2" width="4" height="2.4" fill="#e2b43a"/>
<rect x="781.5" y="292" width="2.4" height="3.5" fill="#e2b43a"/>
<rect x="781.5" y="344" width="2.4" height="3" fill="#e2b43a"/>
<rect x="742.5" y="330.3" width="4" height="2.4" fill="#e2b43a"/>
<rect x="794" y="330.3" width="4" height="2.4" fill="#e2b43a"/>
<rect x="785.6" y="292" width="2.4" height="3.5" fill="#e2b43a"/>
<rect x="785.6" y="344" width="2.4" height="3" fill="#e2b43a"/>
<rect x="742.5" y="334.4" width="4" height="2.4" fill="#e2b43a"/>
<rect x="794" y="334.4" width="4" height="2.4" fill="#e2b43a"/>
<rect x="789.7" y="292" width="2.4" height="3.5" fill="#e2b43a"/>
<rect x="789.7" y="344" width="2.4" height="3" fill="#e2b43a"/>
<rect x="742.5" y="338.5" width="4" height="2.4" fill="#e2b43a"/>
<rect x="794" y="338.5" width="4" height="2.4" fill="#e2b43a"/>
<rect x="746.2" y="294.8" width="48.2" height="49.8" fill="#585858"/>
<circle cx="749" cy="298.5" r="1" fill="#eee"/>
<path d="M745 293.5L748 293.5" stroke="#f6f6f2" stroke-width="0.8"/>
<path d="M792 293.5L795.5 293.5" stroke="#f6f6f2" stroke-width="1"/>
<path d="M795.5 293.5L795.5 297" stroke="#f6f6f2" stroke-width="1"/>
<path d="M795.5 342L795.5 345.5" stroke="#f6f6f2" stroke-width="1"/>
<path d="M792 345.5L795.5 345.5" stroke="#f6f6f2" stroke-width="1"/>
<text x="770" y="340" font-size="12.5" fill="#f4f4f4" text-anchor="start" transform="rotate(-90 770 340)" textLength="38" lengthAdjust="spacingAndGlyphs">QFN44</text>
<text x="780" y="333" font-size="7" fill="#f4f4f4" text-anchor="start" transform="rotate(-90 780 333)" textLength="30" lengthAdjust="spacingAndGlyphs">8x8 T T</text>
<text x="745" y="292" font-size="8.4" fill="#f6f6f2" text-anchor="start">U1</text>
<rect x="720" y="313" width="16.5" height="17.5" fill="#f6f6f2"/>
<rect x="720" y="314" width="7" height="15.5" fill="#e2b43a"/>
<rect x="720.9" y="317.72" width="5.2" height="8.06" fill="#c4c8d2"/>
<rect x="720.9" y="319.43" width="5.2" height="4.65" fill="#7a4a12"/>
<rect x="728.5" y="314" width="7.5" height="15.5" fill="#e2b43a"/>
<rect x="729.4" y="317.72" width="5.7" height="8.06" fill="#c4c8d2"/>
<rect x="729.4" y="319.43" width="5.7" height="4.65" fill="#7a4a12"/>
<text x="721" y="302" font-size="7.28" fill="#f6f6f2" text-anchor="start" transform="rotate(90 721 302)">C5</text>
<text x="729" y="302" font-size="7.28" fill="#f6f6f2" text-anchor="start" transform="rotate(90 729 302)">C6</text>
<rect x="798" y="283" width="8.5" height="18.5" fill="#f6f6f2"/>
<rect x="799" y="284" width="6.5" height="16.5" fill="#e2b43a"/>
<rect x="799.9" y="287.44" width="4.7" height="9.62" fill="#c4c8d2"/>
<rect x="799.9" y="289.48" width="4.7" height="5.55" fill="#0c0c0c"/>
<text x="807" y="284" font-size="7.84" fill="#f6f6f2" text-anchor="start" transform="rotate(90 807 284)">R30</text>
<rect x="823" y="283" width="22" height="9" fill="#e2b43a"/>
<rect x="831" y="283" width="7" height="9" fill="#f4f4f0"/>
<rect x="832.5" y="284" width="4" height="7" fill="#6e8a14"/>
<text x="846" y="292" font-size="8.96" fill="#f6f6f2" text-anchor="start">D5</text>
<rect x="798" y="305" width="18" height="17.5" fill="#f6f6f2"/>
<rect x="799" y="306" width="7.5" height="15.5" fill="#e2b43a"/>
<rect x="799.9" y="309.72" width="5.7" height="8.06" fill="#c4c8d2"/>
<rect x="799.9" y="311.43" width="5.7" height="4.65" fill="#7a4a12"/>
<rect x="807.5" y="306" width="7.5" height="15.5" fill="#e2b43a"/>
<rect x="808.4" y="309.72" width="5.7" height="8.06" fill="#c4c8d2"/>
<rect x="808.4" y="311.43" width="5.7" height="4.65" fill="#7a4a12"/>
<text x="806" y="335.5" font-size="8.4" fill="#f6f6f2" text-anchor="start" transform="rotate(-90 806 335.5)">C4</text>
<text x="814.5" y="335.5" font-size="8.4" fill="#f6f6f2" text-anchor="start" transform="rotate(-90 814.5 335.5)">C7</text>
<rect x="799" y="338" width="17.5" height="9" fill="#f6f6f2"/>
<rect x="800" y="339" width="15.5" height="7" fill="#e2b43a"/>
<rect x="803.2" y="339.9" width="9.1" height="5.2" fill="#c4c8d2"/>
<rect x="805.12" y="339.9" width="5.25" height="5.2" fill="#7a4a12"/>
<text x="817" y="346" font-size="8.96" fill="#f6f6f2" text-anchor="start">C1</text>
<rect x="799" y="352" width="17.5" height="9" fill="#f6f6f2"/>
<rect x="800" y="353" width="15.5" height="7" fill="#e2b43a"/>
<rect x="803.2" y="353.9" width="9.1" height="5.2" fill="#c4c8d2"/>
<rect x="805.12" y="353.9" width="5.25" height="5.2" fill="#7a4a12"/>
<text x="817" y="360" font-size="8.96" fill="#f6f6f2" text-anchor="start">C32</text>
<rect x="799" y="361" width="17.5" height="9" fill="#f6f6f2"/>
<rect x="800" y="362" width="15.5" height="7" fill="#e2b43a"/>
<rect x="803.2" y="362.9" width="9.1" height="5.2" fill="#c4c8d2"/>
<rect x="805.12" y="362.9" width="5.25" height="5.2" fill="#0c0c0c"/>
<text x="817" y="369.5" font-size="8.96" fill="#f6f6f2" text-anchor="start">R20</text>
<rect x="746" y="358" width="17.5" height="9" fill="#f6f6f2"/>
<rect x="747" y="359" width="15.5" height="7" fill="#e2b43a"/>
<rect x="750.2" y="359.9" width="9.1" height="5.2" fill="#c4c8d2"/>
<rect x="752.12" y="359.9" width="5.25" height="5.2" fill="#0c0c0c"/>
<rect x="746" y="367" width="17.5" height="9" fill="#f6f6f2"/>
<rect x="747" y="368" width="15.5" height="7" fill="#e2b43a"/>
<rect x="750.2" y="368.9" width="9.1" height="5.2" fill="#c4c8d2"/>
<rect x="752.12" y="368.9" width="5.25" height="5.2" fill="#0c0c0c"/>
<text x="764" y="366" font-size="8.96" fill="#f6f6f2" text-anchor="start">R22</text>
<text x="764" y="375.5" font-size="8.96" fill="#f6f6f2" text-anchor="start">R23</text>
<rect x="744.5" y="377.5" width="20.5" height="25.5" fill="none" stroke="#f6f6f2" stroke-width="1"/>
<rect x="746" y="379" width="6" height="7" fill="#e2b43a"/>
<rect x="757" y="379" width="6" height="7" fill="#e2b43a"/>
<rect x="751" y="393" width="7" height="8" fill="#e2b43a"/>
<rect x="747.5" y="380.5" width="3" height="3" fill="#f0e0a0"/>
<rect x="758.5" y="380.5" width="3" height="3" fill="#f0e0a0"/>
<rect x="753" y="396" width="3" height="3" fill="#f0e0a0"/>
<rect x="745" y="385" width="19" height="9" fill="#080808"/>
<text x="766" y="384" font-size="7.84" fill="#f6f6f2" text-anchor="start" transform="rotate(90 766 384)">Q3</text>
<text x="735" y="393" font-size="7.84" fill="#f6f6f2" text-anchor="start" transform="rotate(90 735 393)">R1</text>
<rect x="782" y="371" width="9" height="18" fill="#f6f6f2"/>
<rect x="783" y="372" width="7" height="16" fill="#e2b43a"/>
<rect x="783.9" y="375.32" width="5.2" height="9.36" fill="#c4c8d2"/>
<rect x="783.9" y="377.3" width="5.2" height="5.4" fill="#0c0c0c"/>
<text x="783" y="390" font-size="7.84" fill="#f6f6f2" text-anchor="start" transform="rotate(90 783 390)">R35</text>
<rect x="791.5" y="369.5" width="24.5" height="21.5" fill="none" stroke="#f6f6f2" stroke-width="1"/>
<rect x="793" y="371" width="7" height="6" fill="#e2b43a"/>
<rect x="793" y="382" width="7" height="6" fill="#e2b43a"/>
<rect x="807" y="376" width="7" height="8" fill="#e2b43a"/>
<rect x="799" y="371" width="9" height="18" fill="#080808"/>
<rect x="794.5" y="372.5" width="3" height="3" fill="#f0e0a0"/>
<rect x="794.5" y="383.5" width="3" height="3" fill="#f0e0a0"/>
<rect x="809.5" y="378" width="3" height="3" fill="#f0e0a0"/>
<text x="817" y="390" font-size="8.96" fill="#f6f6f2" text-anchor="start">Q2</text>
<rect x="799" y="391" width="17.5" height="9" fill="#f6f6f2"/>
<rect x="800" y="392" width="15.5" height="7" fill="#e2b43a"/>
<rect x="803.2" y="392.9" width="9.1" height="5.2" fill="#c4c8d2"/>
<rect x="805.12" y="392.9" width="5.25" height="5.2" fill="#0c0c0c"/>
<text x="817" y="399.5" font-size="8.96" fill="#f6f6f2" text-anchor="start">R21</text>
<rect x="866" y="273" width="33.5" height="18" fill="#f6f6f2"/>
<rect x="867" y="274" width="7.5" height="16" fill="#e2b43a"/>
<rect x="867.9" y="277.84" width="5.7" height="8.32" fill="#c4c8d2"/>
<rect x="867.9" y="279.6" width="5.7" height="4.8" fill="#7a4a12"/>
<rect x="875.5" y="274" width="7.5" height="16" fill="#e2b43a"/>
<rect x="876.4" y="277.84" width="5.7" height="8.32" fill="#c4c8d2"/>
<rect x="876.4" y="279.6" width="5.7" height="4.8" fill="#0c0c0c"/>
<rect x="884" y="273.5" width="14.5" height="8" fill="#e2b43a"/>
<rect x="887.48" y="274.4" width="7.54" height="6.2" fill="#c4c8d2"/>
<rect x="889.08" y="274.4" width="4.35" height="6.2" fill="#0c0c0c"/>
<rect x="884" y="282" width="14.5" height="8" fill="#e2b43a"/>
<rect x="887.48" y="282.9" width="7.54" height="6.2" fill="#c4c8d2"/>
<rect x="889.08" y="282.9" width="4.35" height="6.2" fill="#0c0c0c"/>
<text x="900" y="281" font-size="8.4" fill="#f6f6f2" text-anchor="start">R28</text>
<text x="900" y="290" font-size="8.4" fill="#f6f6f2" text-anchor="start">R18</text>
<text x="859.5" y="290" font-size="7.84" fill="#f6f6f2" text-anchor="start" transform="rotate(90 859.5 290)">C34</text>
<rect x="877" y="291" width="5" height="12.5" fill="#e2b43a"/>
<rect x="878.6" y="296" width="1.8" height="6" fill="#d8d8d8"/>
<rect x="877" y="325.5" width="5" height="12.5" fill="#e2b43a"/>
<rect x="878.6" y="327" width="1.8" height="6" fill="#d8d8d8"/>
<rect x="884.7" y="291" width="5" height="12.5" fill="#e2b43a"/>
<rect x="886.3" y="296" width="1.8" height="6" fill="#d8d8d8"/>
<rect x="884.7" y="325.5" width="5" height="12.5" fill="#e2b43a"/>
<rect x="886.3" y="327" width="1.8" height="6" fill="#d8d8d8"/>
<rect x="892.3" y="291" width="5" height="12.5" fill="#e2b43a"/>
<rect x="893.9" y="296" width="1.8" height="6" fill="#d8d8d8"/>
<rect x="892.3" y="325.5" width="5" height="12.5" fill="#e2b43a"/>
<rect x="893.9" y="327" width="1.8" height="6" fill="#d8d8d8"/>
<rect x="900" y="291" width="5" height="12.5" fill="#e2b43a"/>
<rect x="901.6" y="296" width="1.8" height="6" fill="#d8d8d8"/>
<rect x="900" y="325.5" width="5" height="12.5" fill="#e2b43a"/>
<rect x="901.6" y="327" width="1.8" height="6" fill="#d8d8d8"/>
<rect x="876" y="303" width="30" height="23" fill="#060606"/>
<rect x="879" y="320.5" width="2" height="2" fill="#ddd"/>
<rect x="866" y="306" width="9" height="17.5" fill="#f6f6f2"/>
<rect x="867" y="307" width="7" height="15.5" fill="#e2b43a"/>
<rect x="867.9" y="310.2" width="5.2" height="9.1" fill="#c4c8d2"/>
<rect x="867.9" y="312.12" width="5.2" height="5.25" fill="#7a4a12"/>
<text x="867.5" y="325" font-size="7.84" fill="#f6f6f2" text-anchor="start" transform="rotate(70 867.5 325)">U7</text>
<rect x="858" y="339" width="49" height="17.5" fill="#f6f6f2"/>
<rect x="859" y="340" width="7.5" height="15.5" fill="#e2b43a"/>
<rect x="859.9" y="343.72" width="5.7" height="8.06" fill="#c4c8d2"/>
<rect x="859.9" y="345.43" width="5.7" height="4.65" fill="#7a4a12"/>
<rect x="867.5" y="340" width="7.5" height="15.5" fill="#e2b43a"/>
<rect x="868.4" y="343.72" width="5.7" height="8.06" fill="#c4c8d2"/>
<rect x="868.4" y="345.43" width="5.7" height="4.65" fill="#0c0c0c"/>
<rect x="876" y="339.5" width="14.5" height="8" fill="#e2b43a"/>
<rect x="879.48" y="340.4" width="7.54" height="6.2" fill="#c4c8d2"/>
<rect x="881.08" y="340.4" width="4.35" height="6.2" fill="#0c0c0c"/>
<rect x="876" y="348" width="14.5" height="8" fill="#e2b43a"/>
<rect x="879.48" y="348.9" width="7.54" height="6.2" fill="#c4c8d2"/>
<rect x="881.08" y="348.9" width="4.35" height="6.2" fill="#0c0c0c"/>
<rect x="892" y="340" width="7" height="15.5" fill="#e2b43a"/>
<rect x="892.9" y="343.72" width="5.2" height="8.06" fill="#c4c8d2"/>
<rect x="892.9" y="345.43" width="5.2" height="4.65" fill="#0c0c0c"/>
<rect x="899.5" y="340" width="7" height="15.5" fill="#e2b43a"/>
<rect x="900.4" y="343.72" width="5.2" height="8.06" fill="#c4c8d2"/>
<rect x="900.4" y="345.43" width="5.2" height="4.65" fill="#0c0c0c"/>
<rect x="890" y="356" width="17.5" height="9" fill="#f6f6f2"/>
<rect x="891" y="357" width="15.5" height="7" fill="#e2b43a"/>
<rect x="894.2" y="357.9" width="9.1" height="5.2" fill="#c4c8d2"/>
<rect x="896.12" y="357.9" width="5.25" height="5.2" fill="#0c0c0c"/>
<text x="859.5" y="357" font-size="7.84" fill="#f6f6f2" text-anchor="start" transform="rotate(90 859.5 357)">C3</text>
<text x="867.5" y="357" font-size="7.84" fill="#f6f6f2" text-anchor="start" transform="rotate(90 867.5 357)">R4</text>
<text x="875.5" y="364" font-size="8.4" fill="#f6f6f2" text-anchor="start">R16</text>
<text x="875.5" y="372" font-size="8.4" fill="#f6f6f2" text-anchor="start">R26</text>
<text x="908" y="364" font-size="8.4" fill="#f6f6f2" text-anchor="start">R25</text>
<text x="908" y="340" font-size="6.72" fill="#f6f6f2" text-anchor="start" transform="rotate(70 908 340)">R24</text>
<text x="913" y="340" font-size="6.72" fill="#f6f6f2" text-anchor="start" transform="rotate(70 913 340)">R27</text>
<rect x="862.5" y="373" width="34" height="18.5" fill="#f6f6f2"/>
<rect x="863" y="374" width="7.5" height="16.5" fill="#e2b43a"/>
<rect x="863.9" y="377.96" width="5.7" height="8.58" fill="#c4c8d2"/>
<rect x="863.9" y="379.77" width="5.7" height="4.95" fill="#0c0c0c"/>
<rect x="872" y="374" width="7.5" height="16.5" fill="#e2b43a"/>
<rect x="872.9" y="377.96" width="5.7" height="8.58" fill="#c4c8d2"/>
<rect x="872.9" y="379.77" width="5.7" height="4.95" fill="#0c0c0c"/>
<rect x="880.5" y="374" width="7.5" height="16.5" fill="#e2b43a"/>
<rect x="881.4" y="377.96" width="5.7" height="8.58" fill="#c4c8d2"/>
<rect x="881.4" y="379.77" width="5.7" height="4.95" fill="#0c0c0c"/>
<rect x="889" y="374" width="7.5" height="16.5" fill="#e2b43a"/>
<rect x="889.9" y="377.96" width="5.7" height="8.58" fill="#c4c8d2"/>
<rect x="889.9" y="379.77" width="5.7" height="4.95" fill="#0c0c0c"/>
<text x="854.5" y="374" font-size="7.84" fill="#f6f6f2" text-anchor="start" transform="rotate(90 854.5 374)">R52</text>
<text x="847" y="374" font-size="7.84" fill="#f6f6f2" text-anchor="start" transform="rotate(90 847 374)">R46</text>
<text x="898.5" y="375" font-size="7.84" fill="#f6f6f2" text-anchor="start" transform="rotate(90 898.5 375)">R49</text>
<text x="906" y="375" font-size="7.84" fill="#f6f6f2" text-anchor="start" transform="rotate(90 906 375)">R50</text>
<rect x="872" y="391" width="16" height="9" fill="#f6f6f2"/>
<rect x="873" y="392" width="14" height="7" fill="#e2b43a"/>
<rect x="875.84" y="392.9" width="8.32" height="5.2" fill="#c4c8d2"/>
<rect x="877.6" y="392.9" width="4.8" height="5.2" fill="#0c0c0c"/>
<rect x="889.5" y="391" width="16" height="9" fill="#f6f6f2"/>
<rect x="890.5" y="392" width="14" height="7" fill="#e2b43a"/>
<rect x="893.34" y="392.9" width="8.32" height="5.2" fill="#c4c8d2"/>
<rect x="895.1" y="392.9" width="4.8" height="5.2" fill="#0c0c0c"/>
<text x="870.5" y="392.5" font-size="8.4" fill="#f6f6f2" text-anchor="start" transform="rotate(180 870.5 392.5)">R42</text>
<rect x="849.7" y="401" width="5.600" height="12" rx="2.800" fill="#e2b43a"/>
<rect x="850.9" y="406.5" width="3.2" height="5.5" fill="#f4f4f4"/>
<rect x="849.7" y="436.500" width="5.600" height="12" rx="2.800" fill="#e2b43a"/>
<rect x="850.9" y="437" width="3.2" height="5.5" fill="#f4f4f4"/>
<rect x="857.4" y="401" width="5.600" height="12" rx="2.800" fill="#e2b43a"/>
<rect x="858.6" y="406.5" width="3.2" height="5.5" fill="#f4f4f4"/>
<rect x="857.4" y="436.500" width="5.600" height="12" rx="2.800" fill="#e2b43a"/>
<rect x="858.6" y="437" width="3.2" height="5.5" fill="#f4f4f4"/>
<rect x="865.1" y="401" width="5.600" height="12" rx="2.800" fill="#e2b43a"/>
<rect x="866.3" y="406.5" width="3.2" height="5.5" fill="#f4f4f4"/>
<rect x="865.1" y="436.500" width="5.600" height="12" rx="2.800" fill="#e2b43a"/>
<rect x="866.3" y="437" width="3.2" height="5.5" fill="#f4f4f4"/>
<rect x="872.8" y="401" width="5.600" height="12" rx="2.800" fill="#e2b43a"/>
<rect x="874" y="406.5" width="3.2" height="5.5" fill="#f4f4f4"/>
<rect x="872.8" y="436.500" width="5.600" height="12" rx="2.800" fill="#e2b43a"/>
<rect x="874" y="437" width="3.2" height="5.5" fill="#f4f4f4"/>
<rect x="880.5" y="401" width="5.600" height="12" rx="2.800" fill="#e2b43a"/>
<rect x="881.7" y="406.5" width="3.2" height="5.5" fill="#f4f4f4"/>
<rect x="880.5" y="436.500" width="5.600" height="12" rx="2.800" fill="#e2b43a"/>
<rect x="881.7" y="437" width="3.2" height="5.5" fill="#f4f4f4"/>
<rect x="888.2" y="401" width="5.600" height="12" rx="2.800" fill="#e2b43a"/>
<rect x="889.4" y="406.5" width="3.2" height="5.5" fill="#f4f4f4"/>
<rect x="888.2" y="436.500" width="5.600" height="12" rx="2.800" fill="#e2b43a"/>
<rect x="889.4" y="437" width="3.2" height="5.5" fill="#f4f4f4"/>
<rect x="895.9" y="401" width="5.600" height="12" rx="2.800" fill="#e2b43a"/>
<rect x="897.1" y="406.5" width="3.2" height="5.5" fill="#f4f4f4"/>
<rect x="895.9" y="436.500" width="5.600" height="12" rx="2.800" fill="#e2b43a"/>
<rect x="897.1" y="437" width="3.2" height="5.5" fill="#f4f4f4"/>
<rect x="849" y="412" width="53.5" height="25" fill="#060606"/>
<path d="M897 420v-2.500l1.200-1.500l1.200 1.500v2.500z" fill="#f0e000"/>
<path d="M902.8 413L902.8 437" stroke="#f6f6f2" stroke-width="0.8"/>
<rect x="831.3" y="402.3" width="16.5" height="7.5" fill="#f6f6f2"/>
<rect x="832.3" y="403.3" width="14.5" height="5.5" fill="#e2b43a"/>
<rect x="835.26" y="404.2" width="8.58" height="3.7" fill="#c4c8d2"/>
<rect x="837.07" y="404.2" width="4.95" height="3.7" fill="#0c0c0c"/>
<rect x="831.5" y="411.5" width="7.5" height="17" fill="#f6f6f2"/>
<rect x="832.5" y="412.5" width="5.5" height="15" fill="#e2b43a"/>
<rect x="833.4" y="415.58" width="3.7" height="8.84" fill="#c4c8d2"/>
<rect x="833.4" y="417.45" width="3.7" height="5.1" fill="#0c0c0c"/>
<rect x="840" y="411.5" width="8" height="17" fill="#f6f6f2"/>
<rect x="841" y="412.5" width="6" height="15" fill="#e2b43a"/>
<rect x="841.9" y="415.58" width="4.2" height="8.84" fill="#c4c8d2"/>
<rect x="841.9" y="417.45" width="4.2" height="5.1" fill="#0c0c0c"/>
<rect x="831.5" y="429.5" width="7.5" height="17" fill="#f6f6f2"/>
<rect x="832.5" y="430.5" width="5.5" height="15" fill="#e2b43a"/>
<rect x="833.4" y="433.58" width="3.7" height="8.84" fill="#c4c8d2"/>
<rect x="833.4" y="435.45" width="3.7" height="5.1" fill="#0c0c0c"/>
<rect x="840" y="429.5" width="8" height="17" fill="#f6f6f2"/>
<rect x="841" y="430.5" width="6" height="15" fill="#e2b43a"/>
<rect x="841.9" y="433.58" width="4.2" height="8.84" fill="#c4c8d2"/>
<rect x="841.9" y="435.45" width="4.2" height="5.1" fill="#7a4a12"/>
<text x="823" y="403" font-size="7.84" fill="#f6f6f2" text-anchor="start" transform="rotate(90 823 403)">R36</text>
<text x="815.5" y="403" font-size="6.72" fill="#f6f6f2" text-anchor="start" transform="rotate(90 815.5 403)">C8</text>
<text x="823" y="417" font-size="7.84" fill="#f6f6f2" text-anchor="start" transform="rotate(90 823 417)">R47</text>
<text x="815.5" y="417" font-size="7.84" fill="#f6f6f2" text-anchor="start" transform="rotate(90 815.5 417)">R44</text>
<text x="823" y="432" font-size="7.84" fill="#f6f6f2" text-anchor="start" transform="rotate(90 823 432)">C36</text>
<text x="815.5" y="432" font-size="7.84" fill="#f6f6f2" text-anchor="start" transform="rotate(90 815.5 432)">R51</text>
<rect x="905" y="412" width="6.8" height="16.5" fill="#e2b43a"/>
<rect x="905.9" y="415.96" width="5" height="8.58" fill="#c4c8d2"/>
<rect x="905.9" y="417.77" width="5" height="4.95" fill="#7a4a12"/>
<rect x="905" y="430" width="6.8" height="16.5" fill="#e2b43a"/>
<rect x="905.9" y="433.96" width="5" height="8.58" fill="#c4c8d2"/>
<rect x="905.9" y="435.77" width="5" height="4.95" fill="#7a4a12"/>
<text x="904.5" y="400" font-size="7.84" fill="#f6f6f2" text-anchor="start" transform="rotate(90 904.5 400)">U6</text>
<text x="913" y="392" font-size="7.84" fill="#f6f6f2" text-anchor="start" transform="rotate(90 913 392)">C33</text>
<text x="921.5" y="400" font-size="7.84" fill="#f6f6f2" text-anchor="start" transform="rotate(90 921.5 400)">C</text>
<rect x="913.5" y="407" width="7.5" height="17.5" fill="#f6f6f2"/>
<rect x="914.5" y="408" width="5.5" height="15.5" fill="#e2b43a"/>
<rect x="915.4" y="411.2" width="3.7" height="9.1" fill="#c4c8d2"/>
<rect x="915.4" y="413.12" width="3.7" height="5.25" fill="#0c0c0c"/>
<text x="921.5" y="408.5" font-size="7.84" fill="#f6f6f2" text-anchor="start" transform="rotate(90 921.5 408.5)">R41</text>
<rect x="913" y="425" width="9" height="21" fill="#e2b43a"/>
<rect x="913" y="431.93" width="9" height="7.14" fill="#f4f4f0"/>
<rect x="913" y="432.88" width="9" height="5.25" fill="#6e8a14"/>
<text x="914.5" y="448" font-size="7.84" fill="#f6f6f2" text-anchor="start" transform="rotate(90 914.5 448)">D7</text>
<text x="905.5" y="448" font-size="7.84" fill="#f6f6f2" text-anchor="start" transform="rotate(90 905.5 448)">C35</text>
<rect x="848.4" y="450.3" width="16" height="7.8" fill="#f6f6f2"/>
<rect x="849.4" y="451.3" width="14" height="5.8" fill="#e2b43a"/>
<rect x="852.24" y="452.2" width="8.32" height="4" fill="#c4c8d2"/>
<rect x="854" y="452.2" width="4.8" height="4" fill="#0c0c0c"/>
<text x="847" y="451.5" font-size="7.84" fill="#f6f6f2" text-anchor="start" transform="rotate(180 847 451.5)">R40</text>
<rect x="866" y="450.3" width="7.8" height="16.5" fill="#f6f6f2"/>
<rect x="867" y="451.3" width="5.8" height="14.5" fill="#e2b43a"/>
<rect x="867.9" y="454.26" width="4" height="8.58" fill="#c4c8d2"/>
<rect x="867.9" y="456.07" width="4" height="4.95" fill="#0c0c0c"/>
<rect x="879.3" y="450.3" width="8.4" height="16.5" fill="#f6f6f2"/>
<rect x="880.3" y="451.3" width="6.4" height="14.5" fill="#e2b43a"/>
<rect x="881.2" y="454.26" width="4.6" height="8.58" fill="#c4c8d2"/>
<rect x="881.2" y="456.07" width="4.6" height="4.95" fill="#0c0c0c"/>
<text x="888.5" y="451" font-size="7.84" fill="#f6f6f2" text-anchor="start" transform="rotate(90 888.5 451)">R45</text>
<text x="864.5" y="460.5" font-size="7.84" fill="#f6f6f2" text-anchor="start" transform="rotate(180 864.5 460.5)">R53</text>
<rect x="872" y="468" width="8" height="5" fill="#e2b43a"/>
<rect x="902" y="468" width="9" height="5" fill="#e2b43a"/>
<text x="916" y="473" font-size="7.84" fill="#f6f6f2" text-anchor="start">R</text>
<rect x="776" y="457.5" width="15.5" height="93" fill="#1e1e1e"/>
<path d="M776 457.5L791.5 457.5" stroke="#f6f6f2" stroke-width="1"/>
<rect x="782.3" y="464.3" width="3.4" height="3.4" fill="#f0c870"/>
<rect x="782.3" y="479.3" width="3.4" height="3.4" fill="#f0c870"/>
<path d="M776.5 473.3L791 473.3" stroke="#333" stroke-width="0.8"/>
<rect x="782.3" y="494.8" width="3.4" height="3.4" fill="#f0c870"/>
<path d="M776.5 488.8L791 488.8" stroke="#333" stroke-width="0.8"/>
<rect x="782.3" y="510.3" width="3.4" height="3.4" fill="#f0c870"/>
<path d="M776.5 504.3L791 504.3" stroke="#333" stroke-width="0.8"/>
<rect x="782.3" y="525.3" width="3.4" height="3.4" fill="#f0c870"/>
<path d="M776.5 519.3L791 519.3" stroke="#333" stroke-width="0.8"/>
<rect x="782.3" y="541.3" width="3.4" height="3.4" fill="#f0c870"/>
<path d="M776.5 535.3L791 535.3" stroke="#333" stroke-width="0.8"/>
<text x="793.5" y="458" font-size="7.28" fill="#f6f6f2" text-anchor="start" transform="rotate(90 793.5 458)">P8</text>
<path d="M965 266.500H930.500V467H1019" fill="none" stroke="#f6f6f2" stroke-width="1"/>
<path d="M930.500 289.500H962V444.500H930.500" fill="none" stroke="#f6f6f2" stroke-width="1"/>
<path d="M945.500 444.500V428.500H962" fill="none" stroke="#f6f6f2" stroke-width="1"/>
<circle cx="938" cy="297.2" r="5" fill="#e2b43a"/>
<circle cx="953.5" cy="297.2" r="5" fill="#e2b43a"/>
<circle cx="938" cy="297.2" r="1.8" fill="#4a4020"/>
<circle cx="953.5" cy="297.2" r="1.8" fill="#4a4020"/>
<rect x="937" y="295.4" width="29" height="3.6" fill="#a9a59c"/>
<circle cx="938" cy="312.72" r="5" fill="#e2b43a"/>
<circle cx="953.5" cy="312.72" r="5" fill="#e2b43a"/>
<circle cx="938" cy="312.72" r="1.8" fill="#4a4020"/>
<circle cx="953.5" cy="312.72" r="1.8" fill="#4a4020"/>
<rect x="937" y="310.92" width="29" height="3.6" fill="#a9a59c"/>
<circle cx="938" cy="328.24" r="5" fill="#e2b43a"/>
<circle cx="953.5" cy="328.24" r="5" fill="#e2b43a"/>
<circle cx="938" cy="328.24" r="1.8" fill="#4a4020"/>
<circle cx="953.5" cy="328.24" r="1.8" fill="#4a4020"/>
<rect x="937" y="326.44" width="29" height="3.6" fill="#a9a59c"/>
<circle cx="938" cy="343.76" r="5" fill="#e2b43a"/>
<circle cx="953.5" cy="343.76" r="5" fill="#e2b43a"/>
<circle cx="938" cy="343.76" r="1.8" fill="#4a4020"/>
<circle cx="953.5" cy="343.76" r="1.8" fill="#4a4020"/>
<rect x="937" y="341.96" width="29" height="3.6" fill="#a9a59c"/>
<circle cx="938" cy="359.28" r="5" fill="#e2b43a"/>
<circle cx="953.5" cy="359.28" r="5" fill="#e2b43a"/>
<circle cx="938" cy="359.28" r="1.8" fill="#4a4020"/>
<circle cx="953.5" cy="359.28" r="1.8" fill="#4a4020"/>
<rect x="937" y="357.48" width="29" height="3.6" fill="#a9a59c"/>
<circle cx="938" cy="374.8" r="5" fill="#e2b43a"/>
<circle cx="953.5" cy="374.8" r="5" fill="#e2b43a"/>
<circle cx="938" cy="374.8" r="1.8" fill="#4a4020"/>
<circle cx="953.5" cy="374.8" r="1.8" fill="#4a4020"/>
<rect x="937" y="373" width="29" height="3.6" fill="#a9a59c"/>
<circle cx="938" cy="390.32" r="5" fill="#e2b43a"/>
<circle cx="953.5" cy="390.32" r="5" fill="#e2b43a"/>
<circle cx="938" cy="390.32" r="1.8" fill="#4a4020"/>
<circle cx="953.5" cy="390.32" r="1.8" fill="#4a4020"/>
<rect x="937" y="388.52" width="29" height="3.6" fill="#a9a59c"/>
<circle cx="938" cy="405.84" r="5" fill="#e2b43a"/>
<circle cx="953.5" cy="405.84" r="5" fill="#e2b43a"/>
<circle cx="938" cy="405.84" r="1.8" fill="#4a4020"/>
<circle cx="953.5" cy="405.84" r="1.8" fill="#4a4020"/>
<rect x="937" y="404.04" width="29" height="3.6" fill="#a9a59c"/>
<circle cx="938" cy="421.36" r="5" fill="#e2b43a"/>
<circle cx="953.5" cy="421.36" r="5" fill="#e2b43a"/>
<circle cx="938" cy="421.36" r="1.8" fill="#4a4020"/>
<circle cx="953.5" cy="421.36" r="1.8" fill="#4a4020"/>
<rect x="937" y="419.56" width="29" height="3.6" fill="#a9a59c"/>
<circle cx="938" cy="436.88" r="5" fill="#e2b43a"/>
<circle cx="953.5" cy="436.88" r="5" fill="#e2b43a"/>
<circle cx="938" cy="436.88" r="1.8" fill="#4a4020"/>
<circle cx="953.5" cy="436.88" r="1.8" fill="#4a4020"/>
<rect x="937" y="435.08" width="29" height="3.6" fill="#a9a59c"/>
<text x="936.5" y="274" font-size="8.96" fill="#f6f6f2" text-anchor="start" transform="rotate(90 936.5 274)">20</text>
<text x="952.5" y="274" font-size="8.96" fill="#f6f6f2" text-anchor="start" transform="rotate(90 952.5 274)">19</text>
<text x="922" y="267" font-size="7.84" fill="#f6f6f2" text-anchor="start" transform="rotate(90 922 267)">P4</text>
<text x="937.5" y="455.5" font-size="7.84" fill="#f6f6f2" text-anchor="start" transform="rotate(90 937.5 455.5)">2</text>
<text x="953.5" y="455.5" font-size="7.84" fill="#f6f6f2" text-anchor="start" transform="rotate(90 953.5 455.5)">1</text>
<circle cx="938" cy="461.5" r="1.2" fill="#e8c020"/>
<rect x="965.2" y="266" width="53.8" height="200.8" fill="#212121"/>
<rect x="980" y="357" width="30" height="4" fill="#a9a59c" rx="1.500"/>
<rect x="980" y="373" width="30" height="4" fill="#a9a59c" rx="1.500"/>
<path d="M985 176.600H1033V183M985 253.500H1033V247" fill="none" stroke="#f4f4f0" stroke-width="1"/>
<path d="M993 177L993 182.5" stroke="#f4f4f0" stroke-width="1.2"/>
<path d="M993 248L993 253.5" stroke="#f4f4f0" stroke-width="1.2"/>
<path d="M996.4 177L996.4 182.5" stroke="#f4f4f0" stroke-width="1.2"/>
<path d="M996.4 248L996.4 253.5" stroke="#f4f4f0" stroke-width="1.2"/>
<path d="M999.8 177L999.8 182.5" stroke="#f4f4f0" stroke-width="1.2"/>
<path d="M999.8 248L999.8 253.5" stroke="#f4f4f0" stroke-width="1.2"/>
<path d="M1003.2 177L1003.2 182.5" stroke="#f4f4f0" stroke-width="1.2"/>
<path d="M1003.2 248L1003.2 253.5" stroke="#f4f4f0" stroke-width="1.2"/>
<path d="M1006.6 177L1006.6 182.5" stroke="#f4f4f0" stroke-width="1.2"/>
<path d="M1006.6 248L1006.6 253.5" stroke="#f4f4f0" stroke-width="1.2"/>
<path d="M1010 177L1010 182.5" stroke="#f4f4f0" stroke-width="1.2"/>
<path d="M1010 248L1010 253.5" stroke="#f4f4f0" stroke-width="1.2"/>
<path d="M1013.4 177L1013.4 182.5" stroke="#f4f4f0" stroke-width="1.2"/>
<path d="M1013.4 248L1013.4 253.5" stroke="#f4f4f0" stroke-width="1.2"/>
<path d="M1016.8 177L1016.8 182.5" stroke="#f4f4f0" stroke-width="1.2"/>
<path d="M1016.8 248L1016.8 253.5" stroke="#f4f4f0" stroke-width="1.2"/>
<path d="M1020.2 177L1020.2 182.5" stroke="#f4f4f0" stroke-width="1.2"/>
<path d="M1020.2 248L1020.2 253.5" stroke="#f4f4f0" stroke-width="1.2"/>
<path d="M1023.6 177L1023.6 182.5" stroke="#f4f4f0" stroke-width="1.2"/>
<path d="M1023.6 248L1023.6 253.5" stroke="#f4f4f0" stroke-width="1.2"/>
<path d="M1027 177L1027 182.5" stroke="#f4f4f0" stroke-width="1.2"/>
<path d="M1027 248L1027 253.5" stroke="#f4f4f0" stroke-width="1.2"/>
<path d="M1030.4 177L1030.4 182.5" stroke="#f4f4f0" stroke-width="1.2"/>
<path d="M1030.4 248L1030.4 253.5" stroke="#f4f4f0" stroke-width="1.2"/>
<rect x="985" y="180" width="53" height="70.5" fill="url(#thr)"/>
<path d="M996.5 180.500L999.7 250.500" fill="none" stroke="#a8a08c" stroke-width="1.8"/>
<path d="M998.8 180.500L1002 250.500" fill="none" stroke="#e6e2d4" stroke-width="1.2" opacity=".7"/>
<path d="M1001.2 180.500L1004.4 250.500" fill="none" stroke="#a8a08c" stroke-width="1.8"/>
<path d="M1003.5 180.500L1006.7 250.500" fill="none" stroke="#e6e2d4" stroke-width="1.2" opacity=".7"/>
<path d="M1005.9 180.500L1009.1 250.500" fill="none" stroke="#a8a08c" stroke-width="1.8"/>
<path d="M1008.2 180.500L1011.4 250.500" fill="none" stroke="#e6e2d4" stroke-width="1.2" opacity=".7"/>
<path d="M1010.6 180.500L1013.8 250.500" fill="none" stroke="#a8a08c" stroke-width="1.8"/>
<path d="M1012.9 180.500L1016.1 250.500" fill="none" stroke="#e6e2d4" stroke-width="1.2" opacity=".7"/>
<path d="M1015.3 180.500L1018.5 250.500" fill="none" stroke="#a8a08c" stroke-width="1.8"/>
<path d="M1017.6 180.500L1020.8 250.500" fill="none" stroke="#e6e2d4" stroke-width="1.2" opacity=".7"/>
<path d="M1020 180.500L1023.2 250.500" fill="none" stroke="#a8a08c" stroke-width="1.8"/>
<path d="M1022.3 180.500L1025.5 250.500" fill="none" stroke="#e6e2d4" stroke-width="1.2" opacity=".7"/>
<path d="M1024.7 180.500L1027.9 250.500" fill="none" stroke="#a8a08c" stroke-width="1.8"/>
<path d="M1027 180.500L1030.2 250.500" fill="none" stroke="#e6e2d4" stroke-width="1.2" opacity=".7"/>
<path d="M1029.4 180.500L1032.6 250.500" fill="none" stroke="#a8a08c" stroke-width="1.8"/>
<path d="M1031.7 180.500L1034.9 250.500" fill="none" stroke="#e6e2d4" stroke-width="1.2" opacity=".7"/>
<path d="M1034.1 180.500L1037.3 250.500" fill="none" stroke="#a8a08c" stroke-width="1.8"/>
<path d="M1036.4 180.500L1039.6 250.500" fill="none" stroke="#e6e2d4" stroke-width="1.2" opacity=".7"/>
<rect x="1038" y="185.5" width="9.5" height="59" fill="url(#sil)"/>
<rect x="897" y="170" width="88" height="91.3" fill="#dbd5c5"/>
<rect x="897" y="170" width="88" height="2.5" fill="#e6e2d2"/>
<rect x="897" y="257" width="88" height="4.3" fill="#cfc9b7"/>
<rect x="897" y="170" width="4" height="91" fill="#e4e0d0"/>
<rect x="898.5" y="185" width="2.5" height="60" fill="#24552b"/>
<path d="M897.5 170L897.5 261.5" stroke="#f6f6f2" stroke-width="1"/>
<path d="M897 261.3L985 261.3" stroke="#efece2" stroke-width="1"/>
<rect x="1062" y="181" width="35.5" height="68.5" fill="url(#bnc)"/>
<path d="M1079 181h5q9 10 9.500 30l-2 0q-1-16-12.500-30z" fill="#8c9ca8"/>
<path d="M1071 183h8q10 10 12 28q1 10-5 12q-7 1.500-9-5q-1-5 3-8q-1-14-9-27z" fill="#d8dad6"/>
<rect x="1047" y="173" width="15" height="84" fill="url(#bnc)" rx="2"/>
<rect x="1097" y="172" width="40" height="85.5" fill="url(#bnc)" rx="3"/>
<rect x="1101.5" y="172" width="26.5" height="85.5" fill="#c0d0dc" opacity=".45"/>
<rect x="1101.5" y="174" width="26.5" height="1.5" fill="#8e9ca8" opacity=".5"/>
<rect x="1101.5" y="177.78" width="26.5" height="1.5" fill="#8e9ca8" opacity=".5"/>
<rect x="1101.5" y="181.56" width="26.5" height="1.5" fill="#8e9ca8" opacity=".5"/>
<rect x="1101.5" y="185.34" width="26.5" height="1.5" fill="#8e9ca8" opacity=".5"/>
<rect x="1101.5" y="189.12" width="26.5" height="1.5" fill="#8e9ca8" opacity=".5"/>
<rect x="1101.5" y="192.9" width="26.5" height="1.5" fill="#8e9ca8" opacity=".5"/>
<rect x="1101.5" y="196.68" width="26.5" height="1.5" fill="#8e9ca8" opacity=".5"/>
<rect x="1101.5" y="200.46" width="26.5" height="1.5" fill="#8e9ca8" opacity=".5"/>
<rect x="1101.5" y="204.24" width="26.5" height="1.5" fill="#8e9ca8" opacity=".5"/>
<rect x="1101.5" y="208.02" width="26.5" height="1.5" fill="#8e9ca8" opacity=".5"/>
<rect x="1101.5" y="211.8" width="26.5" height="1.5" fill="#8e9ca8" opacity=".5"/>
<rect x="1101.5" y="215.58" width="26.5" height="1.5" fill="#8e9ca8" opacity=".5"/>
<rect x="1101.5" y="219.36" width="26.5" height="1.5" fill="#8e9ca8" opacity=".5"/>
<rect x="1101.5" y="223.14" width="26.5" height="1.5" fill="#8e9ca8" opacity=".5"/>
<rect x="1101.5" y="226.92" width="26.5" height="1.5" fill="#8e9ca8" opacity=".5"/>
<rect x="1101.5" y="230.7" width="26.5" height="1.5" fill="#8e9ca8" opacity=".5"/>
<rect x="1101.5" y="234.48" width="26.5" height="1.5" fill="#8e9ca8" opacity=".5"/>
<rect x="1101.5" y="238.26" width="26.5" height="1.5" fill="#8e9ca8" opacity=".5"/>
<rect x="1101.5" y="242.04" width="26.5" height="1.5" fill="#8e9ca8" opacity=".5"/>
<rect x="1101.5" y="245.82" width="26.5" height="1.5" fill="#8e9ca8" opacity=".5"/>
<rect x="1101.5" y="249.6" width="26.5" height="1.5" fill="#8e9ca8" opacity=".5"/>
<rect x="1101.5" y="253.38" width="26.5" height="1.5" fill="#8e9ca8" opacity=".5"/>
<rect x="1127.8" y="173" width="1" height="83.5" fill="#90a0ac" opacity=".8"/>
<rect x="1137" y="181.5" width="56" height="67.5" fill="url(#bnc)"/>
<rect x="1137" y="198" width="15" height="34" fill="#b8c6d0"/>
<rect x="1193" y="190" width="6.5" height="50" fill="#9aa8b4"/>
<path d="M1199 184l3-2.500h10l3 2.500v62l-3 2.500h-10l-3-2.500z" fill="url(#bnc)"/>
<rect x="1199" y="198" width="16" height="34" fill="#bccad4" opacity=".8"/>
<rect x="811" y="473" width="177" height="93" fill="#078207"/>
<rect x="819.5" y="495" width="3" height="3" fill="#f0d080"/>
<rect x="819.5" y="510.5" width="3" height="3" fill="#f0d080"/>
<rect x="819.5" y="525.5" width="3" height="3" fill="#f0d080"/>
<rect x="819.5" y="541.5" width="3" height="3" fill="#f0d080"/>
<rect x="834.5" y="495" width="3" height="3" fill="#f0d080"/>
<rect x="834.5" y="510.5" width="3" height="3" fill="#f0d080"/>
<rect x="834.5" y="525.5" width="3" height="3" fill="#f0d080"/>
<rect x="834.5" y="541.5" width="3" height="3" fill="#f0d080"/>
<text x="806" y="490" font-size="7.28" fill="#f6f6f2" text-anchor="start" transform="rotate(90 806 490)">SP1</text>
<path d="M988.5 494L988.5 546" stroke="#f6f6f2" stroke-width="1"/>
<rect x="964" y="501" width="34" height="6" fill="#fbcf82"/>
<rect x="964" y="517" width="24" height="5" fill="#f4c478"/>
<rect x="964" y="533" width="34" height="5.5" fill="#fbcf82"/>
<rect x="988" y="501" width="10" height="37.5" fill="#fbcf82"/>
<rect x="998" y="504" width="17" height="31" fill="url(#sma)"/>
<rect x="1014" y="501" width="7" height="37" fill="url(#sma)"/>
<path d="M1016 501L1016 538" stroke="#c89848" stroke-width="0.8"/>
<path d="M1019 501L1019 538" stroke="#c89848" stroke-width="0.8"/>
<rect x="1021" y="496" width="16.5" height="47" fill="url(#smr)"/>
<rect x="1037" y="495" width="36" height="25.5" fill="#f3de96"/>
<rect x="1037" y="520.5" width="36" height="23.5" fill="#dcc987"/>
<path d="M1037.5 495L1037.5 544" stroke="#cdb878" stroke-width="1"/>
<path d="M1073 491H1303A28 28.800 0 0 1 1303 548.700H1073z" fill="url(#ant)"/>
<rect x="1240" y="491" width="7" height="1.5" fill="#8a6e70"/>
<rect x="1240" y="547.2" width="7" height="1.5" fill="#8a6e70"/>
<rect x="1265" y="491" width="6" height="1.5" fill="#8a6e70"/>
<rect x="1265" y="547.2" width="6" height="1.5" fill="#8a6e70"/>
<rect x="1240" y="492.5" width="7" height="54.7" fill="#3e3e3e" opacity=".35"/>
<rect x="1265" y="492.5" width="6" height="54.7" fill="#3e3e3e" opacity=".35"/>
<circle cx="1306" cy="515.5" r="3" fill="#7a7a7a" opacity=".7"/>
<path d="M387.400 444V437.300H407.500M440 437.300H466.500V444M387.400 518V524.500M466.500 518V524.500" fill="none" stroke="#f6f6f2" stroke-width="1"/>
<circle cx="424" cy="444.6" r="12" fill="#e2b43a"/>
<circle cx="424" cy="444.6" r="9" fill="#2c2c2c"/>
<circle cx="424" cy="517.6" r="12" fill="#e2b43a"/>
<circle cx="424" cy="517.6" r="9" fill="#2c2c2c"/>
<rect x="91" y="467.3" width="262" height="27.7" fill="url(#cab)"/>
<rect x="361" y="451.5" width="26" height="58" fill="#8e8e8e"/>
<rect x="352" y="470.5" width="35" height="20.5" fill="#9a9a9a"/>
<rect x="361" y="470.5" width="26" height="20.5" fill="#a0a0a0"/>
<rect x="387" y="443.8" width="79.8" height="74" fill="#373737"/>
<rect x="387" y="443.8" width="79.8" height="5" fill="#2e2e2e"/>
<rect x="387" y="449" width="79.8" height="1" fill="#4c4c4c"/>
<rect x="387" y="510" width="79.8" height="6" fill="#3c3c3c"/>
<rect x="387" y="516" width="79.8" height="1.8" fill="#2a2a2a"/>
<text x="402.5" y="426" font-size="7.84" fill="#f6f6f2" text-anchor="start" transform="rotate(90 402.5 426)">P2</text>
<clipPath id="oc"><rect x="0" y="81" width="1366" height="596"/></clipPath>
<circle cx="478.5" cy="663" r="15" fill="url(#org)" clip-path="url(#oc)"/>
</svg>
<div class="bar" style="left:0;top:0;width:1366px;height:51px;background:#d5d1c9"></div>
<div class="bar" style="left:0;top:0;width:846px;height:25px;background:#dfdcd5"></div>
<div class="bar" style="left:1141px;top:0;width:225px;height:25px;background:#dfdcd5"></div>
<div class="bar" style="left:0;top:25px;width:1366px;height:26px;background:#dfdcd5"></div>
<div class="grip" style="left:2px;top:4px"></div>
<div class="grip" style="left:2px;top:30px"></div>
<div class="grip" style="left:532px;top:4px"></div>
<div class="grip" style="left:839px;top:30px"></div>
<div class="grip" style="left:1145px;top:4px"></div>
<div class="grip" style="left:1102px;top:30px"></div>
<div class="grip" style="left:1258px;top:30px"></div>
<svg class="abs" style="left:10px;top:4px" width="16" height="16"><rect x="0.5" y="0.5" width="14" height="14" fill="#e8c24a" stroke="#3a3a3a"/><rect x="1" y="1" width="3.2" height="13" fill="#444"/><path d="M4 6.5h4.5a1.8 1.8 0 1 0 0-0.1z" fill="#444"/><circle cx="9.3" cy="6.8" r="1.6" fill="#444"/></svg>
<div class="mi" style="left:29.5px;top:5px">D<u>X</u>P</div>
<div class="mi" style="left:60.5px;top:5px"><u>F</u>ile</div>
<div class="mi" style="left:92.3px;top:5px"><u>E</u>dit</div>
<div class="mi" style="left:126.7px;top:5px"><u>V</u>iew</div>
<div class="mi" style="left:164.3px;top:5px">Proje<u>c</u>t</div>
<div class="mi" style="left:214.5px;top:5px"><u>P</u>lace</div>
<div class="mi" style="left:255.6px;top:5px"><u>D</u>esign</div>
<div class="mi" style="left:303px;top:5px"><u>T</u>ools</div>
<div class="mi" style="left:344px;top:5px">Ro<u>u</u>te</div>
<div class="mi" style="left:389.5px;top:5px"><u>R</u>eports</div>
<div class="mi" style="left:443.5px;top:5px"><u>W</u>indow</div>
<div class="mi" style="left:497.5px;top:5px"><u>H</u>elp</div>
<div class="combo" style="left:537px;top:3px;width:198px;height:18px"><span style="left:3px;top:2px;font-size:10.5px">D:\Google\Altium\My altium projects\Fi</span><i></i></div>
<svg class="abs" style="left:737px;top:2px" width="110" height="22"><circle cx="9" cy="10" r="8" fill="#3fae2a" stroke="#2a7a1c"/><path d="M4 10l5-4.5v3h5v3h-5v3z" fill="#fff"/><path d="M22 9h6l-3 3z" fill="#222"/><circle cx="40" cy="10" r="8" fill="#bdbdbd" stroke="#8e8e8e"/><path d="M45 10l-5-4.5v3h-5v3h5v3z" fill="#e8e8e8"/><path d="M53 9h6l-3 3z" fill="#777"/><path d="M63 11l9-8 9 8h-2v7h-14v-7z" fill="#f4f4ff" stroke="#c85020" stroke-width="1.2"/><path d="M62.5 11.5l9.5-8.5 9.5 8.5" fill="none" stroke="#d85a18" stroke-width="2"/><rect x="69.5" y="11" width="5" height="6" fill="#2a6ad8"/><path d="M87.5 3.5h9l4 4v11h-13z" fill="#fff" stroke="#3a78c8"/><path d="M90 9h6l-2-2m2 6h-6l2 2" stroke="#2060c0" stroke-width="1.4" fill="none"/></svg>
<svg class="abs" style="left:1148px;top:2px" width="218" height="22"><path d="M3 5v13h12z" fill="#3faa4a" stroke="#1c6a2a"/><rect x="5" y="15" width="13" height="4" fill="#f0c040" stroke="#a87818" stroke-width=".6"/><path d="M8 14l9-10 2.5 2-9 10z" fill="#f0a030" stroke="#8a5010" stroke-width=".6"/><path d="M26 9h6l-3 3z" fill="#111"/><rect x="40.500" y="4.500" width="9" height="5" fill="#f8a0a0" stroke="#d04040"/><rect x="40.500" y="13.500" width="9" height="5" fill="#f8a0a0" stroke="#d04040"/><rect x="42.500" y="9" width="11" height="4.500" fill="#a8d0f0" stroke="#3a80c8"/><path d="M62 9h6l-3 3z" fill="#111"/><path d="M76 13l2-8h3v4h2v-4h3l2 8v1h-5v-2h-2v2h-5z" fill="#9a9aa0" stroke="#55555c" stroke-width=".8"/><rect x="80.500" y="16.500" width="3" height="3" fill="#f0d050" stroke="#806010" stroke-width=".7"/><rect x="87.500" y="16.500" width="3" height="3" fill="#f0d050" stroke="#806010" stroke-width=".7"/><path d="M98 9h6l-3 3z" fill="#111"/><path d="M112.500 4v14h14" fill="none" stroke="#3070c0" stroke-width="1.4"/><rect x="115" y="10" width="11" height="4" fill="#f0b040" stroke="#a06810" stroke-width=".6"/><rect x="111" y="2.500" width="3" height="3" fill="#f0d050" stroke="#806010" stroke-width=".6"/><rect x="124.500" y="16.500" width="3" height="3" fill="#f0d050" stroke="#806010" stroke-width=".6"/><path d="M134 9h6l-3 3z" fill="#111"/><path d="M148.500 4.500h13v8h-7v2h7v5h-13v-8h7v-2h-7z" fill="#a8d0f0" stroke="#2a68b8" stroke-width="1.2"/><path d="M170 9h6l-3 3z" fill="#111"/><path d="M184 7h15M184 11h15M184 15h15M187 4v15M191 4v15M195 4v15" stroke="#3858a8" stroke-width="1.2"/><path d="M206 9h6l-3 3z" fill="#111"/></svg>
<div class="sep" style="left:78.5px;top:28px"></div>
<div class="sep" style="left:129.5px;top:28px"></div>
<div class="sep" style="left:157.5px;top:28px"></div>
<div class="sep" style="left:254.5px;top:28px"></div>
<div class="sep" style="left:351px;top:28px"></div>
<div class="sep" style="left:448.5px;top:28px"></div>
<div class="sep" style="left:499px;top:28px"></div>
<div class="sep" style="left:527.5px;top:28px"></div>
<div class="sep" style="left:555px;top:28px"></div>
<svg class="abs" style="left:0;top:26px" width="560" height="25"><path d="M10.500 5.500h8l4 4v10h-12z" fill="#fff" stroke="#8898b8"/><path d="M18.500 5.500v4h4" fill="#e0e8f8" stroke="#8898b8"/><path d="M32.500 9.500h5l1.500 2h7v8h-13.500z" fill="#f4d070" stroke="#a88018"/><path d="M32.500 19.500l3-6h13l-3 6z" fill="#fce8a0" stroke="#a88018"/><path d="M41 7c2-2 4-2 6 0" fill="none" stroke="#c89018" stroke-width="1.2"/><path d="M45.500 5l2 2.500-3 .5z" fill="#c89018"/><rect x="56.500" y="6.500" width="13" height="13" fill="#7878c8" stroke="#4848a0"/><rect x="59" y="7" width="8" height="5" fill="#f0f0ff"/><rect x="59.500" y="14" width="7" height="5" fill="#d8d8f0"/><rect x="61" y="15" width="2" height="3" fill="#4848a0"/><path d="M87 8l2-3h9l-1 3z" fill="#fff" stroke="#777"/><path d="M84.500 11.500l2-3h12l-1.500 3z" fill="#ddd" stroke="#777"/><rect x="84.500" y="11.500" width="12.500" height="6.500" fill="#ccc" stroke="#777"/><path d="M97 11.500l1.500-3v6.500l-1.500 3z" fill="#aaa" stroke="#777"/><rect x="87" y="13.500" width="8" height="2" fill="#fff"/><path d="M108.500 5.500h7l3 3v9h-10z" fill="#fff" stroke="#8898b8"/><circle cx="114" cy="12" r="3.600" fill="#e8f0ff" stroke="#888"/><path d="M116.500 14.500l4 4" stroke="#d09030" stroke-width="2.200"/><rect x="134.500" y="6.500" width="13" height="11" fill="#fff" stroke="#8090b0"/><rect x="136.500" y="10.500" width="13" height="8" fill="#f8e088" stroke="#b89830"/><rect x="144" y="15" width="5" height="3" fill="#fff8d0"/><rect x="162.500" y="5.500" width="14" height="14" fill="#fff" stroke="#6080c0"/><circle cx="168" cy="11" r="3.600" fill="#e8f0ff" stroke="#777"/><path d="M170.500 13.500l4 4" stroke="#d09030" stroke-width="2.200"/><rect x="185.500" y="5.500" width="14" height="14" fill="none" stroke="#3040a0" stroke-dasharray="2 1.500"/><circle cx="191" cy="11" r="3.600" fill="#e8f0ff" stroke="#777"/><path d="M193.500 13.500l4 4" stroke="#d09030" stroke-width="2.200"/><circle cx="212" cy="12" r="3.600" fill="#e8f0ff" stroke="#777"/><path d="M214.500 14.500l4 4" stroke="#d09030" stroke-width="2.200"/><path d="M220 7l1.500 1.500M222 11l-1 1" stroke="#e8d040" stroke-width="1.500"/><circle cx="235" cy="12" r="3.600" fill="#e8f0ff" stroke="#777"/><path d="M237.500 14.500l4 4" stroke="#d09030" stroke-width="2.200"/><path d="M238 5h8l-3 4v3h-2v-3z" fill="#aaa" stroke="#777" stroke-width=".7"/><path d="M262 6l7 10M272 6l-7 10" stroke="#999" stroke-width="1.400"/><circle cx="263.500" cy="17.500" r="2" fill="none" stroke="#999" stroke-width="1.300"/><circle cx="270.500" cy="17.500" r="2" fill="none" stroke="#999" stroke-width="1.300"/><rect x="283.500" y="6.500" width="7" height="9" fill="#fff" stroke="#5070b0"/><rect x="287.500" y="9.500" width="8" height="10" fill="#fff" stroke="#5070b0"/><path d="M289 12h5M289 14h5M289 16h5" stroke="#5070b0" stroke-width=".8"/><rect x="306.500" y="7.500" width="9" height="11" fill="#ccc" stroke="#999"/><rect x="309" y="6" width="4" height="3" fill="#bbb" stroke="#999" stroke-width=".7"/><rect x="310.500" y="11.500" width="8" height="8" fill="#e4e4e4" stroke="#999"/><rect x="329.500" y="7.500" width="9" height="11" fill="#ccc" stroke="#999"/><rect x="332" y="6" width="4" height="3" fill="#bbb" stroke="#999" stroke-width=".7"/><rect x="333.500" y="11.500" width="8" height="8" fill="#e4e4e4" stroke="#999"/><path d="M335 14h5M335 16h5" stroke="#999" stroke-width=".8"/><rect x="357.500" y="6.500" width="13" height="13" fill="none" stroke="#8890a0" stroke-dasharray="2 1.500"/><path d="M387.500 5v15M380 12.500h15" stroke="#3050a8" stroke-width="1.300"/><path d="M387.500 4l2 3h-4zM387.500 21l2-3h-4zM379 12.500l3-2v4zM396 12.500l-3-2v4z" fill="#3050a8"/><path d="M404 9l4 3.500-4 3.500M408 9l4 3.500-4 3.500" fill="none" stroke="#aaa" stroke-width="1.200" stroke-dasharray="2 1"/><rect x="414" y="7" width="2" height="3" fill="#bbb"/><rect x="414" y="15" width="2" height="3" fill="#bbb"/><path d="M426.500 6.500h11l-4 5v5l-3 -2v-3z" fill="#b8d8f8" stroke="#3878c0"/><path d="M434 13l5 5M439 13l-5 5" stroke="#d02020" stroke-width="1.600"/><path d="M455 10l5-4v3c5 0 8 3 8 9c-1-4-4-5-8-5v3z" fill="#aaa" stroke="#888" stroke-width=".7"/><path d="M492 10l-5-4v3c-5 0-8 3-8 9c1-4 4-5 8-5v3z" fill="#bbb" stroke="#999" stroke-width=".7"/><path d="M506 19l2-4 8-8 2.500 2-8 8z" fill="#e05030" stroke="#902010" stroke-width=".7"/><rect x="506.500" y="4.500" width="5" height="5" fill="#f8e850" stroke="#c0a010" stroke-dasharray="1 1"/><path d="M504 21l3-2" stroke="#333"/><rect x="532.500" y="5.500" width="13" height="13" fill="#f8e8b0" stroke="#a08030"/><rect x="533" y="6" width="4" height="12" fill="#3868b8"/><circle cx="543" cy="13" r="3.600" fill="#e8f0ff" stroke="#777"/><path d="M545.500 15.500l4 4" stroke="#d09030" stroke-width="2.200"/></svg>
<div class="combo" style="left:557px;top:28px;width:149px;height:19px"><span style="left:3px;top:3px;font-size:10.5px">Altium 3D Dk Green</span><i></i></div>
<svg class="abs" style="left:840px;top:26px" width="262" height="25"><path d="M5 18l10-11M5 12l6-6M9 19l8-9" stroke="#a4a4a4" stroke-width="2.200" stroke-dasharray="3 1.200"/><path d="M32 18l11-11" stroke="#a4a4a4" stroke-width="2"/><circle cx="32" cy="18" r="1.800" fill="#ddd" stroke="#a4a4a4"/><circle cx="43.500" cy="7" r="1.800" fill="#ddd" stroke="#a4a4a4"/><path d="M33 14v-6h5" fill="none" stroke="#a4a4a4" stroke-dasharray="2 1"/><path d="M54 8h8v11M62 12l6 3M62 10l7 0" stroke="#a8a8a8" stroke-width="2" fill="none"/><path d="M78 18l11-11" stroke="#a4a4a4" stroke-width="2"/><circle cx="78" cy="18" r="1.800" fill="#ddd" stroke="#a4a4a4"/><circle cx="89.500" cy="7" r="1.800" fill="#ddd" stroke="#a4a4a4"/><path d="M79 14v-6h5" fill="none" stroke="#a4a4a4" stroke-dasharray="2 1"/><circle cx="105" cy="13" r="5" fill="#c4c4c4" stroke="#a0a0a0"/><circle cx="105" cy="13" r="1.800" fill="#e8e8e8" stroke="#999" stroke-width=".6"/><circle cx="126" cy="11" r="5" fill="#c4c4c4" stroke="#a0a0a0"/><circle cx="126" cy="11" r="1.800" fill="#e8e8e8"/><path d="M131 11h6M126 16v4" stroke="#a0a0a0" stroke-width="2.200"/><path d="M146 17a6.500 6.500 0 1 1 11-3" fill="none" stroke="#a8a8a8" stroke-width="1.400"/><path d="M144 14l2 4 3-3z" fill="#a8a8a8"/><rect x="166.500" y="7.500" width="14" height="11" fill="#d0d0d0" stroke="#a0a0a0"/><path d="M189 19v-5h3v-3h3v-3h9v11z" fill="#c0c0c0"/><path d="M189 16h15M189 13h15M189 10h15M192 8v11M195 8v11M198 8v11M201 8v11" stroke="#d5d1c9" stroke-width=".6"/></svg>
<div class="abs" style="left:1050px;top:26px;width:20px;height:24px;font:bold 21px/24px 'Liberation Serif',serif;color:#a8a8a8">A</div>
<svg class="abs" style="left:1074px;top:29px" width="18" height="18"><rect x="3.500" y="3.500" width="11" height="11" fill="#c8e0f8" stroke="#3a70b8"/><path d="M5 1v3M8 1v3M11 1v3M14 1v3M5 14v3M8 14v3M11 14v3M14 14v3M1 5h3M1 8h3M1 11h3M1 14h3M14 5h3M14 8h3M14 11h3M14 14h3" stroke="#3a70b8" stroke-width="1"/></svg>
<div class="combo" style="left:1107px;top:28px;width:122px;height:19px"><span style="left:3px;top:3px;font-size:10.6px">[No Variations]</span><i></i></div>
<svg class="abs" style="left:1232px;top:30px" width="18" height="16"><rect x=".5" y="2.500" width="16" height="11" fill="#2a8a3a" stroke="#145a20"/><path d="M3 5l4 5M7 5l-4 5M10 4l4 5M14 4l-4 5" stroke="#f08020" stroke-width="1.300"/><path d="M10 12h5" stroke="#f8f8c0" stroke-dasharray="1 1"/></svg>
<div class="combo" style="left:1265px;top:28px;width:88px;height:19px"><i></i></div>
<div class="bar" style="left:0;top:51px;width:1366px;height:27px;background:#a7a7a7"></div>
<div class="bar" style="left:0;top:78px;width:1366px;height:3px;background:#dedede"></div>
<div class="bar" style="left:0;top:54px;width:116px;height:26px;background:#dedede"></div>
<svg class="abs" style="left:4px;top:59px" width="18" height="14"><path d="M.5 1.500h16v10h-10v-1.500h-6z" fill="#0a6a3a" stroke="#e8e8e8" stroke-width=".6"/><path d="M2 4h4M2 6h4M2 8h4" stroke="#fff" stroke-width="1"/><path d="M8 7.500v3M10.300 7.500v3M12.600 7.500v3M14.900 7.500v3" stroke="#f8f8c0" stroke-width="1.300"/><rect x="8" y="3" width="3" height="3" fill="#064"/></svg>
<div class="tab" style="left:24px;top:59px;color:#000;font-size:11.2px">GoldFish.PcbDoc</div>
<svg class="abs" style="left:122px;top:60px" width="16" height="12"><rect x=".5" y=".5" width="14" height="10" fill="#f4dc88" stroke="#a89040"/><rect x="8" y="6" width="6" height="4" fill="#fdf2c0"/><path d="M8.500 8h5" stroke="#c8b060" stroke-width=".8"/></svg>
<div class="tab" style="left:142px;top:59px;color:#fff">GF_PowerSupply.SchDoc</div>
<svg class="abs" style="left:278px;top:60px" width="16" height="12"><rect x=".5" y=".5" width="14" height="10" fill="#f4dc88" stroke="#a89040"/><rect x="8" y="6" width="6" height="4" fill="#fdf2c0"/><path d="M8.500 8h5" stroke="#c8b060" stroke-width=".8"/></svg>
<div class="tab" style="left:298px;top:59px;color:#fff">Serial Devices.SchDoc</div>
<svg class="abs" style="left:418px;top:60px" width="16" height="12"><rect x=".5" y=".5" width="14" height="10" fill="#f4dc88" stroke="#a89040"/><rect x="8" y="6" width="6" height="4" fill="#fdf2c0"/><path d="M8.500 8h5" stroke="#c8b060" stroke-width=".8"/></svg>
<div class="tab" style="left:438px;top:59px;color:#fff">DAC.SchDoc</div>
<svg class="abs" style="left:511px;top:60px" width="16" height="12"><rect x=".5" y=".5" width="14" height="10" fill="#f4dc88" stroke="#a89040"/><rect x="8" y="6" width="6" height="4" fill="#fdf2c0"/><path d="M8.500 8h5" stroke="#c8b060" stroke-width=".8"/></svg>
<div class="tab" style="left:531px;top:59px;color:#fff">Motor Drivers.SchDoc</div>
<svg class="abs" style="left:652px;top:60px" width="16" height="12"><rect x=".5" y=".5" width="14" height="10" fill="#f4dc88" stroke="#a89040"/><rect x="8" y="6" width="6" height="4" fill="#fdf2c0"/><path d="M8.500 8h5" stroke="#c8b060" stroke-width=".8"/></svg>
<div class="tab" style="left:672px;top:59px;color:#fff">GF_Microcontroller.SchDoc</div>
<div class="bar" style="left:0;top:677px;width:1197px;height:1.5px;background:#1a1014"></div>
<div class="bar" style="left:0;top:678px;width:1366px;height:19px;background:#d4d0c8"></div>
<div class="bar" style="left:0;top:697px;width:1366px;height:3px;background:#b4b2ae"></div>
<div class="bar" style="left:0;top:700px;width:1366px;height:26px;background:#d4d0c8"></div>
<div class="bar" style="left:0;top:725px;width:1366px;height:2px;background:#fbfbfa"></div>
<div class="bar" style="left:0;top:727px;width:1366px;height:41px;background:#d4d0c8"></div>
<div class="abs" style="left:2px;top:680px;width:44px;height:13px;border:1px solid #8a8a88;background:#d4d0c8"><div class="abs" style="left:0;top:0;width:25px;height:13px;background:#0a7f0a"></div><div class="abs" style="left:30px;top:1px;font:10px/12px 'Liberation Sans',sans-serif;color:#222">LS</div></div>
<div class="ltab" style="left:52px;width:36px;background:#d4d0c8;font-weight:bold"><b style="background:#0a8a0a"></b><span>TL</span></div>
<div class="ltab" style="left:89px;width:36px;background:#fbfbfb;font-weight:normal"><b style="background:#c00000"></b><span>BL</span></div>
<div class="ltab" style="left:126px;width:38px;background:#fbfbfb;font-weight:normal"><b style="background:#ffffff"></b><span>TO</span></div>
<div class="ltab" style="left:165px;width:40px;background:#fbfbfb;font-weight:normal"><b style="background:#ffff00"></b><span>BO</span></div>
<div class="ltab" style="left:206px;width:35px;background:#fbfbfb;font-weight:normal"><b style="background:#800080"></b><span>TS</span></div>
<div class="ltab" style="left:242px;width:37px;background:#fbfbfb;font-weight:normal"><b style="background:#ff00ff"></b><span>BS</span></div>
<div class="btn" style="left:1197px;top:678px;width:33px;height:19px;border-top:none"></div>
<svg class="abs" style="left:1200px;top:680px" width="30" height="16"><circle cx="3.500" cy="4" r="2.300" fill="#f0e840" stroke="#807810" stroke-width=".8"/><circle cx="3.500" cy="11.500" r="2.300" fill="#f0e840" stroke="#807810" stroke-width=".8"/><path d="M9.500 4.500v7l5-3.500z" fill="#58a0f0" stroke="#2060c0" stroke-width=".8"/><path d="M17.500 5h7l-2.500 3v4h-2v-4z" fill="#b8d8f8" stroke="#3878c0" stroke-width=".9"/></svg>
<div class="btn" style="left:1231px;top:678px;width:31px;height:19px;line-height:18px;border-top:none">Snap</div>
<div class="btn" style="left:1265px;top:678px;width:63px;height:19px;line-height:18px;border-top:none">Mask Level</div>
<div class="btn" style="left:1330px;top:678px;width:33px;height:19px;line-height:18px;border-top:none">Clear</div>
<div class="st" style="left:4px;top:706px">X:83.6mm Y:13mm</div>
<div class="st" style="left:105px;top:706px">Grid: 0.1mm</div>
<div class="st" style="left:187px;top:706px">(Hotspot Snap)</div>
<div class="bar" style="left:346px;top:704px;width:1px;height:18px;background:#55524c"></div>
<div class="bar" style="left:694px;top:704px;width:1px;height:18px;background:#55524c"></div>
<div class="btn" style="left:1098px;top:705px;width:44px;height:17px">System</div>
<div class="btn" style="left:1143px;top:705px;width:94px;height:17px">Design Compiler</div>
<div class="btn" style="left:1238px;top:705px;width:42px;height:17px">PCB</div>
<div class="btn" style="left:1281px;top:705px;width:59px;height:17px">Shortcuts</div>
<div class="btn" style="left:1345px;top:705px;width:17px;height:17px">&gt;&gt;</div>
<div class="tbtn" style="left:2px;top:729px;width:52px;height:36px"></div>
<svg class="abs" style="left:4px;top:738px" width="16" height="16"><path d="M1 3q3-2 6 0v5q-3-2-6 0z" fill="#e8542c"/><path d="M8 3q3 2 6 0v5q-3 2-6 0z" fill="#6cb82c"/><path d="M1 9q3-2 6 0v5q-3-2-6 0z" fill="#3a88d8"/><path d="M8 9q3 2 6 0v5q-3 2-6 0z" fill="#f4c020"/></svg>
<div class="abs" style="left:21.5px;top:738px;font:bold 13px/15px 'Liberation Sans',sans-serif;color:#111">Start</div>
<div class="tbtn" style="left:63px;top:729px;width:47px;height:36px"></div>
<div class="tbtn" style="left:113px;top:729px;width:47px;height:36px"></div>
<div class="tbtn" style="left:163px;top:729px;width:47px;height:36px"></div>
<div class="tbtn" style="left:263px;top:729px;width:47px;height:36px"></div>
<div class="tbtn" style="left:363px;top:729px;width:47px;height:36px"></div>
<div class="tbtn" style="left:413px;top:729px;width:47px;height:36px"></div>
<div class="tbtn" style="left:313px;top:729px;width:47px;height:36px;background:#f4f3f0;border-color:#404040 #fff #fff #404040"></div>
<svg class="abs" style="left:0;top:727px" width="470" height="41" viewBox="0 727 470 41"><circle cx="87.300" cy="746.800" r="15.500" fill="#2458c0"/><path d="M73 741q4-9 14-10q12 0 16 10q3 10-3 17q-6 6-15 4q8-3 9-10q0-8-8-11q-7-2-13 0z" fill="#58a0f0"/><path d="M73.500 742q7-6 15-2l4 4-8 1z" fill="#3a80e0"/><path d="M73 747l12-6 13 5-1 12-17 2-6-6z" fill="#f4f2ec"/><path d="M74 747l11 6 12-7" fill="none" stroke="#c8c4b8" stroke-width="1"/><path d="M74 756q5 6 13 6" stroke="#1a3c98" stroke-width="2" fill="none"/><circle cx="137" cy="746.800" r="15.500" fill="#e54335"/><path d="M137 746.800L123.600 739A15.500 15.500 0 0 0 137 762.300L144 751z" fill="#32a450"/><path d="M137 746.800L130 751L137 762.300A15.500 15.500 0 0 0 150.400 739H137z" fill="#fbc116"/><path d="M123.600 739A15.500 15.500 0 0 1 150.400 739H137z" fill="#e54335"/><circle cx="137" cy="746.800" r="7.200" fill="#fff"/><circle cx="137" cy="746.800" r="5.700" fill="#4a8af4"/><path d="M172.500 737.500h11l2 3h18v20h-31z" fill="#ecc868" stroke="#c8a040"/><rect x="173.500" y="742" width="29.500" height="18.500" fill="#fbeeb8" stroke="#d8b858" stroke-width=".6"/><path d="M176 763v-11.500q0-2 2-2h20q2 0 2 2v11.500h-6v-7h-12v7z" fill="#70c0f4" stroke="#2888d0"/><rect x="176" y="735" width="5" height="2" fill="#30a030"/><rect x="184" y="737" width="5" height="2" fill="#d03030"/><rect x="192" y="739.500" width="5" height="2" fill="#3080e0"/><path d="M179 747v10M174 752h10" stroke="#fff" stroke-width="1.200" opacity=".9"/><g transform="rotate(30 237 747)"><rect x="222" y="738" width="30" height="18" rx="1" fill="#111"/><path d="M225 734.500v4M230 734.500v4M235 734.500v4M240 734.500v4M245 734.500v4M250 734.500v4M225 755.500v4M230 755.500v4M235 755.500v4M240 755.500v4M245 755.500v4M250 755.500v4" stroke="#f4e800" stroke-width="3"/><path d="M229 747h16" stroke="#b8b8b8" stroke-width="4"/><circle cx="228" cy="747" r="4.500" fill="#b8b8b8"/><circle cx="226.500" cy="747" r="2" fill="#111"/><rect x="241" y="740" width="9" height="7" fill="#f4e800"/></g><rect x="272" y="736" width="17" height="17" fill="#b4e4a4" stroke="#98d088" transform="rotate(10 280 745)"/><rect x="278" y="741" width="15" height="15" fill="#b0d8f8" stroke="#88b8e8"/><rect x="284" y="739" width="18" height="18" fill="#f8e880" stroke="#e0cc60" transform="rotate(-18 293 748)"/><path d="M322 755.500l12-20h7l1.500 20h-6.500l-.3-4.500h-6.500l-2.200 4.500z" fill="#2c2c2c"/><path d="M331 747l3.500-7 .5 7z" fill="#f4f3f0"/><path d="M323 756h19M336 748.500h9M338 756.500h6" stroke="#c0a060" stroke-width="1.800"/><circle cx="347.500" cy="748.500" r="2.500" fill="none" stroke="#c0a060" stroke-width="1.600"/><circle cx="346" cy="756.500" r="2.200" fill="none" stroke="#c0a060" stroke-width="1.600"/><path d="M386.500 731.500l13.500 13.500q2 2.500-1 3.500l-6 1.500q4 2.500 1 4l-7.500 3.500l-7.500-3.500q-3-1.500 1-4l-6-1.500q-3-1-1-3.500z" fill="#141414"/><path d="M386.500 733.500l6.500 7l-3 1.500l-3.500-3l-3.500 3l-3-1.500z" fill="#e8ecf4"/><ellipse cx="379" cy="759.500" rx="4" ry="1.300" fill="#141414"/><ellipse cx="394" cy="760.500" rx="3" ry="1.100" fill="#141414"/><ellipse cx="387" cy="761" rx="2.500" ry="1.500" fill="#141414"/><path d="M430 734l18 2l-1 24l-4 1z" fill="#e8e4d8" stroke="#b8a878" stroke-width=".8"/><path d="M428 733.500l18 2.500l-4 25l-21-6z" fill="#8cd0ec" stroke="#58a0c8" stroke-width=".8"/><path d="M429 735l15 2.200l-3 20l-17-5z" fill="#b4e2f6" opacity=".8"/><path d="M428 733l18 2.500" stroke="#666" stroke-width="2" stroke-dasharray="1.200 1.200"/></svg>
<div class="abs" style="left:339px;top:733px;font:bold 12.5px/12px 'Liberation Sans',sans-serif;color:#222;letter-spacing:-.5px">17</div>
<div class="abs" style="left:1144px;top:738px;font:12px/14px 'Liberation Sans',sans-serif;color:#000">EN</div>
<div class="bar" style="left:1164px;top:731px;width:1px;height:32px;background:#808080"></div><div class="bar" style="left:1165px;top:731px;width:1px;height:32px;background:#fff"></div>
<div class="abs" style="left:1168px;top:728px;width:194px;height:36px;border:1px solid;border-color:#808080 #fff #fff #808080"></div>
<svg class="abs" style="left:1170px;top:730px" width="194" height="34"><path d="M4 13l3-3 3 3M4 18l3-3 3 3" fill="none" stroke="#111" stroke-width="1.600"/><circle cx="28" cy="17" r="7" fill="#e8e4d0" stroke="#b0a050"/><circle cx="28" cy="17" r="2.500" fill="#fff" stroke="#c0b060"/><path d="M22 20q6 4 12-1" stroke="#e8c030" stroke-width="2" fill="none"/><g transform="translate(-22 1)"><path d="M67.500 8v17" stroke="#555" stroke-width="1.500"/><path d="M68 9q4-2 7 0t6 0v8q-3 2-6 0t-7 0z" fill="#f4f4f4" stroke="#666"/><circle cx="79" cy="20" r="5" fill="#e02020"/><path d="M77 18l4 4M81 18l-4 4" stroke="#fff" stroke-width="1.400"/></g><g transform="translate(-21 1)"><rect x="89.500" y="9.500" width="11" height="14" rx="1.500" fill="#f0f0f0" stroke="#444" stroke-width="1.300"/><path d="M97 8v5M102 8v5" stroke="#333" stroke-width="1.500"/><path d="M95 13h9v4q0 4-4.500 4t-4.500-4z" fill="#fff" stroke="#333" stroke-width="1.300"/><path d="M99.500 21v4" stroke="#333" stroke-width="1.500"/></g><g transform="translate(-24 1)"><path d="M119 13h3l5-5v17l-5-5h-3z" fill="#e8e8e8" stroke="#777"/><path d="M130 11q4 5.500 0 11" fill="none" stroke="#999" stroke-width="1.200"/></g><g transform="translate(15 1)"><rect x="160.500" y="9.500" width="15" height="11" fill="#2868c8" stroke="#88a8d8"/><path d="M160 22h16" stroke="#333" stroke-width="2"/><rect x="161" y="10" width="14" height="4" fill="#4888e0"/></g></svg>
<div class="abs" style="left:1290px;top:732px;width:50px;text-align:center;font:11px/14px 'Liberation Sans',sans-serif;color:#000">10:50 PM</div>
<div class="abs" style="left:1290px;top:748px;width:50px;text-align:center;font:11px/14px 'Liberation Sans',sans-serif;color:#000">1/8/2019</div>
</body></html>
